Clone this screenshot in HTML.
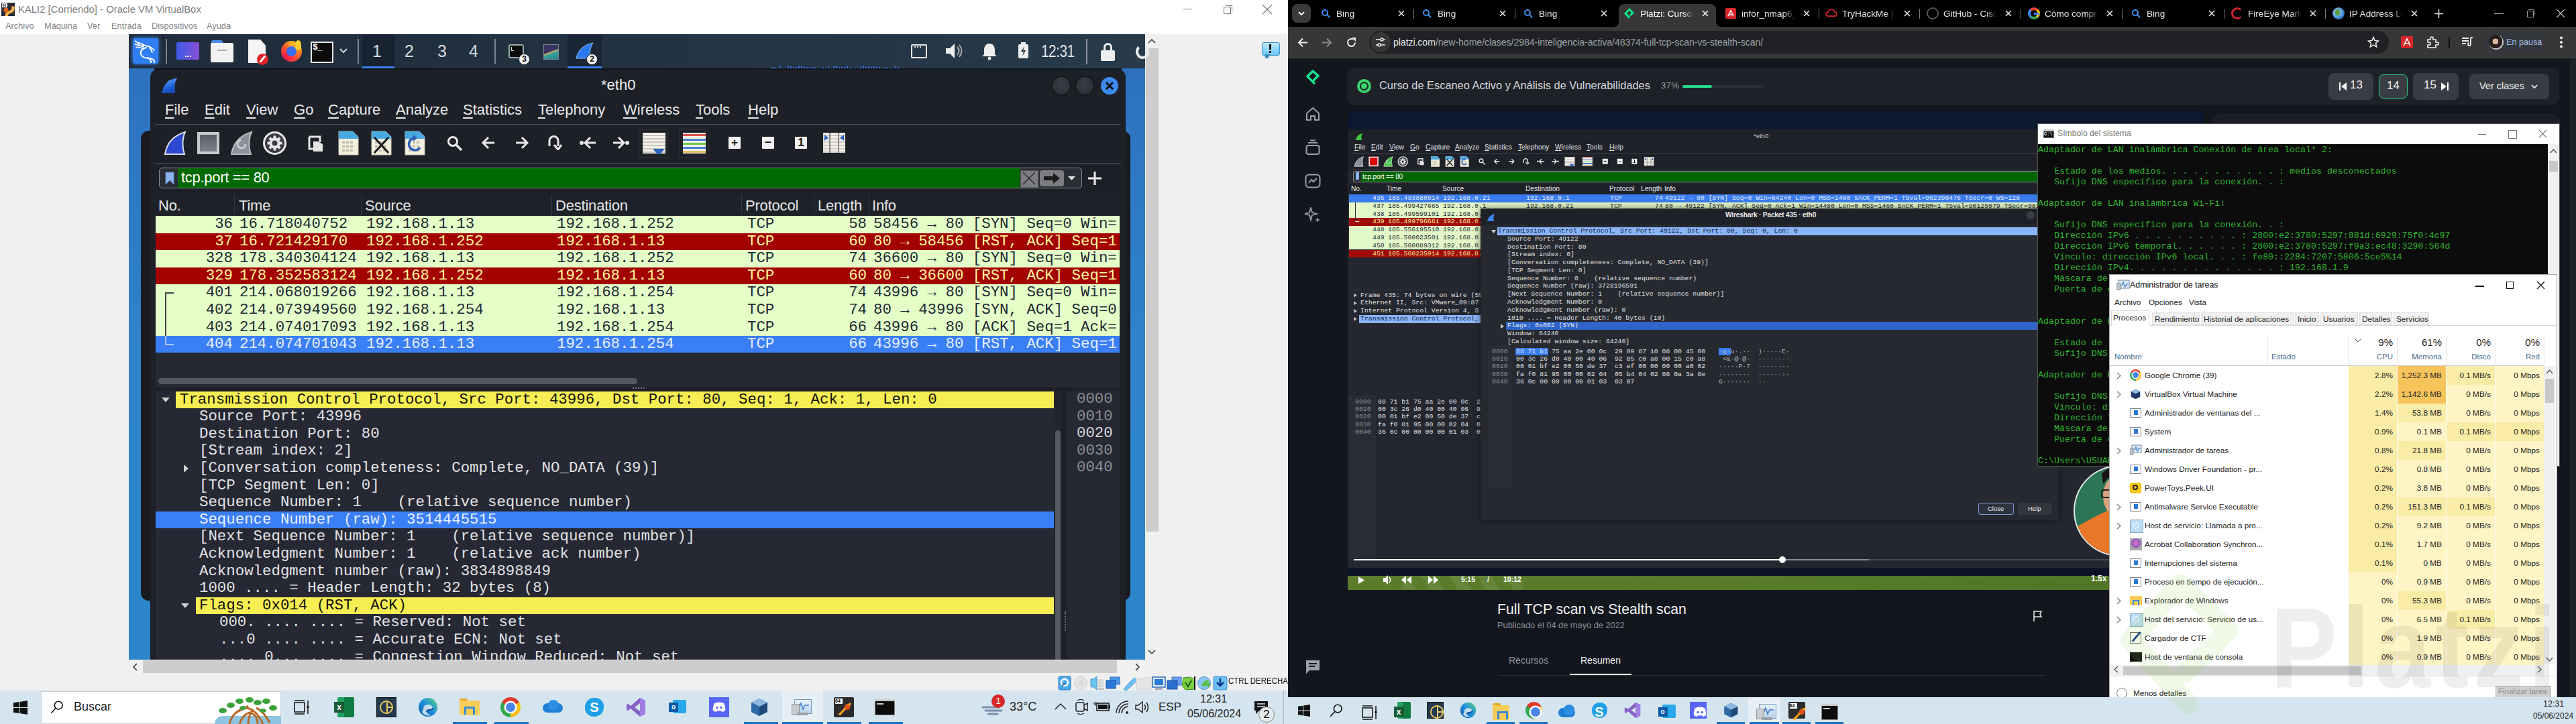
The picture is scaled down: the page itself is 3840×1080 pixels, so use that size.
<!DOCTYPE html>
<html><head><meta charset="utf-8"><style>
html,body{margin:0;padding:0}
body{width:3840px;height:1080px;position:relative;overflow:hidden;background:#000;font-family:"Liberation Sans",sans-serif}
.a{position:absolute}
.m{font-family:"Liberation Mono",monospace}
.nw{white-space:pre}

</style></head><body>
<!-- LEFT MONITOR: VirtualBox frame -->
<div class="a" style="left:0;top:0;width:1920px;height:51px;background:#fff"></div>
<div class="a" style="left:2px;top:4px;width:20px;height:20px;background:#2a2a38"></div>
<svg class="a" style="left:2px;top:4px" width="20" height="20"><path d="M5 20C6 14 9 13 12 12C15 11 16 8 15 5L20 6C20 11 18 15 13 16C10 17 10 19 10 20Z" fill="#f2b14a"/><circle cx="7" cy="11" r="3.5" fill="#e0601a"/><rect x="1" y="1" width="8" height="6" fill="#fff"/><text x="1.5" y="6" font-size="5" font-weight="bold" fill="#123">64</text></svg>
<div class="a nw" style="left:27px;top:6px;font-size:14.85px;color:#7d7d7d">KALI2 [Corriendo] - Oracle VM VirtualBox</div>
<div class="a nw" style="left:8px;top:31px;font-size:12.8px;color:#858585">Archivo</div>
<div class="a nw" style="left:66px;top:31px;font-size:12.8px;color:#858585">Máquina</div>
<div class="a nw" style="left:130px;top:31px;font-size:12.8px;color:#858585">Ver</div>
<div class="a nw" style="left:166px;top:31px;font-size:12.8px;color:#858585">Entrada</div>
<div class="a nw" style="left:226px;top:31px;font-size:12.8px;color:#858585">Dispositivos</div>
<div class="a nw" style="left:308px;top:31px;font-size:12.8px;color:#858585">Ayuda</div>
<!-- window controls -->
<div class="a" style="left:1764px;top:13px;width:13px;height:1px;background:#777"></div>
<div class="a" style="left:1824px;top:10px;width:9px;height:9px;border:1px solid #777"></div>
<div class="a" style="left:1827px;top:8px;width:9px;height:9px;border-top:1px solid #777;border-right:1px solid #777"></div>
<svg class="a" style="left:1881px;top:6px" width="16" height="16"><path d="M1 1L15 15M15 1L1 15" stroke="#777" stroke-width="1.2"/></svg>
<!-- content bg -->
<div class="a" style="left:0;top:51px;width:1920px;height:979px;background:#f0f0f0"></div>
<!-- info bubble -->
<div class="a" style="left:1881px;top:63px;width:25px;height:18px;background:linear-gradient(#bfe8ff,#6cc8f5);border:1px solid #3a8fc8;border-radius:3px"></div>
<div class="a" style="left:1886px;top:81px;width:0;height:0;border-left:4px solid #3a8fc8;border-right:4px solid transparent;border-top:6px solid #3a8fc8"></div>
<div class="a" style="left:1892px;top:66px;width:3px;height:8px;background:#111"></div>
<div class="a" style="left:1892px;top:76px;width:3px;height:3px;background:#111"></div>
<!-- vertical scrollbar -->
<svg class="a" style="left:1711px;top:56px" width="12" height="10"><path d="M1 8L6 3L11 8" stroke="#333" stroke-width="1.5" fill="none"/></svg>
<div class="a" style="left:1708px;top:72px;width:19px;height:721px;background:#cdcdcd"></div>
<svg class="a" style="left:1711px;top:968px" width="12" height="10"><path d="M1 2L6 7L11 2" stroke="#333" stroke-width="1.5" fill="none"/></svg>
<!-- VM screen -->
<div class="a" style="left:192px;top:51px;width:1515px;height:933px;background:linear-gradient(180deg,#2d6fbf 0%,#2f83cc 50%,#2a86c8 100%);overflow:hidden">
</div>
<!-- behind window -->
<div class="a" style="left:210px;top:195px;width:1475px;height:701px;background:#181a20;border-radius:12px"></div>
<!-- Kali panel -->
<div class="a" style="left:192px;top:51px;width:1515px;height:51px;background:linear-gradient(90deg,#1f2c3b,#223240 45%,#273b4b)"></div>
<div class="a" style="left:198px;top:57px;width:38px;height:38px;background:#2f7ff2;border-radius:3px;box-shadow:0 0 6px #3a8cff"></div>
<svg class="a" style="left:199px;top:58px" width="36" height="36" viewBox="0 0 36 36"><path d="M3 4L16 9M2 8L15 12M4 12L14 14M3 3L10 10" stroke="#fff" stroke-width="1.6" fill="none" stroke-linecap="round"/><path d="M13 10Q24 9 31 17M24 12L28 20" stroke="#fff" stroke-width="1.8" fill="none" stroke-linecap="round"/><path d="M19 13Q9 16 11 23Q13 29 24 29Q32 30 31 36M21 28Q27 31 26 36" stroke="#fff" stroke-width="2" fill="none" stroke-linecap="round"/></svg>
<div class="a" style="left:247px;top:58px;width:2px;height:37px;background:#7d8591"></div>
<div class="a" style="left:263px;top:63px;width:34px;height:26px;background:linear-gradient(90deg,#3b5be8,#8a4fd6);border-radius:2px"></div>
<div class="a" style="left:276px;top:83px;width:9px;height:2px;border-top:2px dotted #fff"></div>
<div class="a" style="left:315px;top:60px;width:17px;height:7px;background:#4a90e8;border-radius:3px 3px 0 0"></div>
<div class="a" style="left:314px;top:64px;width:34px;height:29px;background:#f2f2f2;border-radius:2px"></div>
<div class="a" style="left:324px;top:74px;width:14px;height:2px;background:#aaa"></div>
<div class="a" style="left:370px;top:59px;width:26px;height:35px;background:#f4f4f4;clip-path:polygon(0 0,70% 0,100% 25%,100% 100%,0 100%)"></div>
<div class="a" style="left:383px;top:80px;width:17px;height:17px;background:#e0242a;border-radius:50%"></div>
<div class="a" style="left:390px;top:82px;width:3px;height:12px;background:#fff;transform:rotate(40deg)"></div>
<div class="a" style="left:419px;top:61px;width:31px;height:31px;border-radius:50%;background:conic-gradient(from 0deg,#ffb520,#ff8a1a 25%,#ff3b3b 45%,#e8204a 65%,#ff5a2a 85%,#ffb520)"></div><div class="a" style="left:427px;top:69px;width:15px;height:15px;border-radius:50%;background:#3a6ff0"></div><div class="a" style="left:440px;top:60px;width:9px;height:14px;background:#ffd030;border-radius:50% 50% 30% 30%"></div>
<div class="a" style="left:463px;top:62px;width:30px;height:28px;background:#0c0c0c;border:2px solid #e8e8e8"></div>
<div class="a nw m" style="left:466px;top:63px;font-size:13px;color:#fff;font-weight:bold;letter-spacing:-1px">$_</div>
<svg class="a" style="left:506px;top:72px" width="12" height="8"><path d="M1 1L6 6L11 1" stroke="#cfd3d8" stroke-width="2" fill="none"/></svg>
<div class="a" style="left:533px;top:58px;width:2px;height:37px;background:#7d8591"></div>
<div class="a" style="left:540px;top:51px;width:48px;height:51px;background:#172331"></div>
<div class="a" style="left:540px;top:99px;width:48px;height:3px;background:#3b82f0"></div>
<div class="a nw" style="left:555px;top:62px;font-size:25px;color:#d5d9de">1</div>
<div class="a nw" style="left:603px;top:62px;font-size:25px;color:#d5d9de">2</div>
<div class="a nw" style="left:652px;top:62px;font-size:25px;color:#d5d9de">3</div>
<div class="a nw" style="left:699px;top:62px;font-size:25px;color:#d5d9de">4</div>
<div class="a" style="left:737px;top:58px;width:2px;height:37px;background:#7d8591"></div>
<div class="a" style="left:758px;top:66px;width:23px;height:21px;background:#0c0c0c;border:2px solid #9aa;border-radius:3px;box-sizing:border-box"></div><div class="a" style="left:762px;top:70px;width:3px;height:5px;border-left:1.5px solid #ddd;border-bottom:1.5px solid #ddd"></div>
<div class="a" style="left:773px;top:80px;width:17px;height:17px;background:#f2f2f2;border:1.5px solid #222;box-sizing:border-box;border-radius:50%;color:#111;font-size:12px;line-height:15px;text-align:center;font-weight:bold">3</div>
<div class="a" style="left:810px;top:66px;width:21px;height:21px;background:linear-gradient(160deg,#3a3560 45%,#c8b860 52%,#3aa0a0 60%,#2a8890);border:1px solid #7a8a95"></div>
<div class="a" style="left:846px;top:51px;width:51px;height:51px;background:#1a2636"></div>
<div class="a" style="left:846px;top:99px;width:51px;height:3px;background:#3b82f0"></div>
<svg class="a" style="left:858px;top:63px" width="28" height="26"><path d="M1 24C3 14 10 4 26 1C22 7 20 16 22 24Z" fill="#2a78f0" stroke="#9ac0ff" stroke-width="1"/></svg>
<div class="a" style="left:874px;top:80px;width:17px;height:17px;background:#f2f2f2;border:1.5px solid #222;box-sizing:border-box;border-radius:50%;color:#111;font-size:12px;line-height:15px;text-align:center;font-weight:bold">2</div>
<div class="a" style="left:230px;top:102px;width:1442px;height:3px;background:#12151b"></div>
<!-- tray -->
<svg class="a" style="left:1150px;top:97px" width="194" height="5"><rect x="0" y="3" width="2" height="2" fill="#3a70e0"/><rect x="4" y="3" width="2" height="2" fill="#3a70e0"/><rect x="8" y="4" width="2" height="1" fill="#3a70e0"/><rect x="12" y="1" width="2" height="4" fill="#3a70e0"/><rect x="16" y="4" width="2" height="1" fill="#3a70e0"/><rect x="20" y="4" width="2" height="1" fill="#3a70e0"/><rect x="24" y="1" width="2" height="4" fill="#3a70e0"/><rect x="28" y="2" width="2" height="3" fill="#3a70e0"/><rect x="32" y="3" width="2" height="2" fill="#3a70e0"/><rect x="36" y="3" width="2" height="2" fill="#3a70e0"/><rect x="40" y="1" width="2" height="4" fill="#3a70e0"/><rect x="44" y="1" width="2" height="4" fill="#3a70e0"/><rect x="48" y="3" width="2" height="2" fill="#3a70e0"/><rect x="52" y="3" width="2" height="2" fill="#3a70e0"/><rect x="56" y="3" width="2" height="2" fill="#3a70e0"/><rect x="60" y="3" width="2" height="2" fill="#3a70e0"/><rect x="64" y="3" width="2" height="2" fill="#3a70e0"/><rect x="68" y="4" width="2" height="1" fill="#3a70e0"/><rect x="72" y="4" width="2" height="1" fill="#3a70e0"/><rect x="76" y="3" width="2" height="2" fill="#3a70e0"/><rect x="80" y="4" width="2" height="1" fill="#3a70e0"/><rect x="84" y="2" width="2" height="3" fill="#3a70e0"/><rect x="88" y="4" width="2" height="1" fill="#3a70e0"/><rect x="92" y="2" width="2" height="3" fill="#3a70e0"/><rect x="96" y="1" width="2" height="4" fill="#3a70e0"/><rect x="100" y="3" width="2" height="2" fill="#3a70e0"/><rect x="104" y="3" width="2" height="2" fill="#3a70e0"/><rect x="108" y="3" width="2" height="2" fill="#3a70e0"/><rect x="112" y="1" width="2" height="4" fill="#3a70e0"/><rect x="116" y="3" width="2" height="2" fill="#3a70e0"/><rect x="120" y="4" width="2" height="1" fill="#3a70e0"/><rect x="124" y="4" width="2" height="1" fill="#3a70e0"/><rect x="128" y="4" width="2" height="1" fill="#3a70e0"/><rect x="132" y="3" width="2" height="2" fill="#3a70e0"/><rect x="136" y="1" width="2" height="4" fill="#3a70e0"/><rect x="140" y="3" width="2" height="2" fill="#3a70e0"/><rect x="144" y="2" width="2" height="3" fill="#3a70e0"/><rect x="148" y="3" width="2" height="2" fill="#3a70e0"/><rect x="152" y="2" width="2" height="3" fill="#3a70e0"/><rect x="156" y="3" width="2" height="2" fill="#3a70e0"/><rect x="160" y="3" width="2" height="2" fill="#3a70e0"/><rect x="164" y="4" width="2" height="1" fill="#3a70e0"/><rect x="168" y="3" width="2" height="2" fill="#3a70e0"/><rect x="172" y="3" width="2" height="2" fill="#3a70e0"/><rect x="176" y="4" width="2" height="1" fill="#3a70e0"/><rect x="180" y="4" width="2" height="1" fill="#3a70e0"/><rect x="184" y="2" width="2" height="3" fill="#3a70e0"/><rect x="188" y="3" width="2" height="2" fill="#3a70e0"/></svg>
<div class="a" style="left:1358px;top:66px;width:20px;height:17px;border:2px solid #e8e8e8;border-radius:2px"></div>
<div class="a" style="left:1363px;top:69px;width:10px;height:4px;border-top:2px dotted #e8e8e8"></div>
<svg class="a" style="left:1408px;top:62px" width="30" height="28"><path d="M2 10H8L15 3V25L8 18H2Z" fill="#eee"/><path d="M19 8Q24 14 19 20M22 5Q29 14 22 23" stroke="#aaa" stroke-width="2" fill="none"/></svg>
<svg class="a" style="left:1462px;top:62px" width="26" height="28"><path d="M13 3C7 3 5 8 5 13V19L2 22H24L21 19V13C21 8 19 3 13 3Z" fill="#eee"/><circle cx="13" cy="25" r="2.5" fill="#eee"/></svg>
<div class="a" style="left:1518px;top:66px;width:15px;height:21px;background:#eee;border-radius:2px"></div>
<div class="a" style="left:1522px;top:63px;width:7px;height:3px;background:#eee"></div>
<svg class="a" style="left:1519px;top:68px" width="13" height="17"><path d="M8 1L3 9H7L5 16L10 7H6Z" fill="#1e2c3c"/></svg>
<div class="a nw" style="left:1552px;top:62px;font-size:21px;color:#e6e8ea;letter-spacing:-0.6px;transform:scaleY(1.2);transform-origin:0 0">12:31</div>
<div class="a" style="left:1619px;top:58px;width:2px;height:38px;background:#8d949c"></div>
<div class="a" style="left:1641px;top:75px;width:21px;height:16px;background:#eee;border-radius:2px"></div>
<div class="a" style="left:1645px;top:64px;width:13px;height:16px;border:3px solid #eee;border-bottom:none;border-radius:7px 7px 0 0;box-sizing:border-box"></div>
<div class="a" style="left:1693px;top:66px;width:20px;height:22px;border:4px solid #eee;border-radius:50%;box-sizing:border-box;border-top-color:transparent"></div>
<div class="a" style="left:224px;top:104px;width:1454px;height:880px;background:#1e2027;border-radius:10px 10px 0 0"></div>
<div class="a" style="left:241px;top:116px;width:23px;height:23px;background:linear-gradient(160deg,#6fb0ff,#1d5fd8 60%,#0f3fa0);clip-path:polygon(0 100%,15% 55%,45% 18%,100% 0,85% 40%,88% 100%)"></div>
<div class="a nw" style="left:896px;top:114px;font-size:22px;color:#eef0f2">*eth0</div>
<div class="a" style="left:1569px;top:115px;width:26px;height:26px;border-radius:50%;background:radial-gradient(circle at 50% 40%,#3a3d45,#2a2c33);box-shadow:0 0 0 1.5px #111318"></div>
<div class="a" style="left:1604px;top:115px;width:26px;height:26px;border-radius:50%;background:radial-gradient(circle at 50% 40%,#3a3d45,#2a2c33);box-shadow:0 0 0 1.5px #111318"></div>
<div class="a" style="left:1641px;top:115px;width:26px;height:26px;border-radius:50%;background:#3d8bf0"></div>
<svg class="a" style="left:1647px;top:121px" width="14" height="14"><path d="M2 2L12 12M12 2L2 12" stroke="#0d0d0d" stroke-width="3"/></svg>
<div class="a nw" style="left:246px;top:151px;font-size:22px;color:#e8e9eb"><u style="text-underline-offset:4px;text-decoration-thickness:2px">F</u>ile</div>
<div class="a nw" style="left:305px;top:151px;font-size:22px;color:#e8e9eb"><u style="text-underline-offset:4px;text-decoration-thickness:2px">E</u>dit</div>
<div class="a nw" style="left:367px;top:151px;font-size:22px;color:#e8e9eb"><u style="text-underline-offset:4px;text-decoration-thickness:2px">V</u>iew</div>
<div class="a nw" style="left:438px;top:151px;font-size:22px;color:#e8e9eb"><u style="text-underline-offset:4px;text-decoration-thickness:2px">G</u>o</div>
<div class="a nw" style="left:489px;top:151px;font-size:22px;color:#e8e9eb"><u style="text-underline-offset:4px;text-decoration-thickness:2px">C</u>apture</div>
<div class="a nw" style="left:590px;top:151px;font-size:22px;color:#e8e9eb"><u style="text-underline-offset:4px;text-decoration-thickness:2px">A</u>nalyze</div>
<div class="a nw" style="left:690px;top:151px;font-size:22px;color:#e8e9eb"><u style="text-underline-offset:4px;text-decoration-thickness:2px">S</u>tatistics</div>
<div class="a nw" style="left:802px;top:151px;font-size:22px;color:#e8e9eb"><u style="text-underline-offset:4px;text-decoration-thickness:2px">T</u>elephony</div>
<div class="a nw" style="left:929px;top:151px;font-size:22px;color:#e8e9eb"><u style="text-underline-offset:4px;text-decoration-thickness:2px">W</u>ireless</div>
<div class="a nw" style="left:1037px;top:151px;font-size:22px;color:#e8e9eb"><u style="text-underline-offset:4px;text-decoration-thickness:2px">T</u>ools</div>
<div class="a nw" style="left:1115px;top:151px;font-size:22px;color:#e8e9eb"><u style="text-underline-offset:4px;text-decoration-thickness:2px">H</u>elp</div>
<div class="a" style="left:231px;top:185px;width:1440px;height:1px;background:#4d5058"></div>
<div class="a" style="left:231px;top:243px;width:1440px;height:1px;background:#4d5058"></div><svg class="a" style="left:244px;top:195px" width="34" height="37" viewBox="0 0 34 37"><path d="M2 35C4 22 12 8 32 2C28 10 27 24 31 35Z" fill="#2c47d0" stroke="#d9dbe0" stroke-width="2"/></svg>
<div class="a" style="left:294px;top:197px;width:33px;height:33px;box-sizing:border-box;border:4px solid #c9cacd;background:linear-gradient(#5b5e66,#7d8088)"></div>
<svg class="a" style="left:343px;top:195px" width="34" height="37" viewBox="0 0 34 37"><path d="M2 35C4 22 12 8 32 2C28 10 27 24 31 35Z" fill="#8d9098" stroke="#b9bbc0" stroke-width="2"/><path d="M23 20A6 6 0 1 1 17 14" stroke="#c8c9cc" stroke-width="3" fill="none"/></svg>
<svg class="a" style="left:391px;top:195px" width="37" height="37" viewBox="0 0 37 37"><circle cx="18.5" cy="18.5" r="16" fill="#3a3c42" stroke="#e8e8ea" stroke-width="3"/><circle cx="18.5" cy="18.5" r="8" fill="#e8e8ea"/><rect x="16.5" y="7.5" width="4" height="5" fill="#e8e8ea" transform="rotate(0 18.5 18.5)"/><rect x="16.5" y="7.5" width="4" height="5" fill="#e8e8ea" transform="rotate(45 18.5 18.5)"/><rect x="16.5" y="7.5" width="4" height="5" fill="#e8e8ea" transform="rotate(90 18.5 18.5)"/><rect x="16.5" y="7.5" width="4" height="5" fill="#e8e8ea" transform="rotate(135 18.5 18.5)"/><rect x="16.5" y="7.5" width="4" height="5" fill="#e8e8ea" transform="rotate(180 18.5 18.5)"/><rect x="16.5" y="7.5" width="4" height="5" fill="#e8e8ea" transform="rotate(225 18.5 18.5)"/><rect x="16.5" y="7.5" width="4" height="5" fill="#e8e8ea" transform="rotate(270 18.5 18.5)"/><rect x="16.5" y="7.5" width="4" height="5" fill="#e8e8ea" transform="rotate(315 18.5 18.5)"/><circle cx="18.5" cy="18.5" r="4" fill="#3a3c42"/></svg>
<svg class="a" style="left:459px;top:202px" width="24" height="24" viewBox="0 0 24 24"><path d="M2 2H18V10M2 2V20H8" stroke="#e6e6e6" stroke-width="3" fill="none"/><path d="M8 9H15L22 13V24H8Z" fill="#e6e6e6"/></svg>
<svg class="a" style="left:504px;top:195px" width="31" height="37" viewBox="0 0 31 37"><path d="M1 1H22L30 9V36H1Z" fill="#f3f0de" stroke="#c9c7b8"/><path d="M1 1H22L30 9V12H1Z" fill="#4aa8e0"/><g fill="#b9b9a8"><rect x="6" y="16" width="4" height="3"/><rect x="12" y="16" width="4" height="3"/><rect x="18" y="16" width="4" height="3"/><rect x="6" y="22" width="4" height="3"/><rect x="12" y="22" width="4" height="3"/><rect x="18" y="22" width="4" height="3"/><rect x="6" y="28" width="4" height="3"/><rect x="12" y="28" width="4" height="3"/><rect x="18" y="28" width="4" height="3"/></g></svg>
<svg class="a" style="left:553px;top:195px" width="31" height="37" viewBox="0 0 31 37"><path d="M1 1H22L30 9V36H1Z" fill="#f3f0de" stroke="#c9c7b8"/><path d="M1 1H22L30 9V12H1Z" fill="#4aa8e0"/><g fill="#b9b9a8"><rect x="6" y="16" width="4" height="3"/><rect x="12" y="16" width="4" height="3"/><rect x="18" y="16" width="4" height="3"/><rect x="6" y="22" width="4" height="3"/><rect x="12" y="22" width="4" height="3"/><rect x="18" y="22" width="4" height="3"/><rect x="6" y="28" width="4" height="3"/><rect x="12" y="28" width="4" height="3"/><rect x="18" y="28" width="4" height="3"/></g><path d="M5 10L26 33M26 10L5 33" stroke="#1a1a1a" stroke-width="3"/></svg>
<svg class="a" style="left:603px;top:195px" width="31" height="37" viewBox="0 0 31 37"><path d="M1 1H22L30 9V36H1Z" fill="#f3f0de" stroke="#c9c7b8"/><path d="M1 1H22L30 9V12H1Z" fill="#4aa8e0"/><g fill="#b9b9a8"><rect x="6" y="16" width="4" height="3"/><rect x="12" y="16" width="4" height="3"/><rect x="18" y="16" width="4" height="3"/><rect x="6" y="22" width="4" height="3"/><rect x="12" y="22" width="4" height="3"/><rect x="18" y="22" width="4" height="3"/><rect x="6" y="28" width="4" height="3"/><rect x="12" y="28" width="4" height="3"/><rect x="18" y="28" width="4" height="3"/></g><path d="M23 25A9 9 0 1 1 15 11" stroke="#2a5fb8" stroke-width="3.5" fill="none"/><path d="M13 6L19 11L13 16Z" fill="#2a5fb8"/></svg>
<svg class="a" style="left:666px;top:202px" width="24" height="24"><circle cx="9" cy="9" r="6.5" stroke="#e8e8ea" stroke-width="3" fill="none"/><path d="M14 14L22 22" stroke="#e8e8ea" stroke-width="3.5"/></svg>
<svg class="a" style="left:717px;top:203px" width="22" height="20"><path d="M20 10H3M11 2L3 10L11 18" stroke="#e8e8ea" stroke-width="3" fill="none"/></svg>
<svg class="a" style="left:767px;top:203px" width="22" height="20"><path d="M2 10H19M11 2L19 10L11 18" stroke="#e8e8ea" stroke-width="3" fill="none"/></svg>
<svg class="a" style="left:816px;top:201px" width="22" height="23"><path d="M3 17V9A6.5 6.5 0 0 1 16 9V17" stroke="#e8e8ea" stroke-width="3" fill="none"/><path d="M10 15L16 22L21 15" stroke="#e8e8ea" stroke-width="3" fill="none"/></svg>
<svg class="a" style="left:863px;top:203px" width="27" height="20"><circle cx="4" cy="10" r="3" fill="#e8e8ea"/><path d="M25 10H10M17 2L9 10L17 18" stroke="#e8e8ea" stroke-width="3" fill="none"/></svg>
<svg class="a" style="left:912px;top:203px" width="27" height="20"><circle cx="23" cy="10" r="3" fill="#e8e8ea"/><path d="M2 10H17M10 2L18 10L10 18" stroke="#e8e8ea" stroke-width="3" fill="none"/></svg>
<div class="a" style="left:952px;top:193px;width:43px;height:42px;border:1px solid #30333b;border-radius:4px;box-sizing:border-box"></div>
<div class="a" style="left:958px;top:198px;width:34px;height:31px;background:repeating-linear-gradient(#f3f1ea 0 3px,#c9c6bd 3px 5px)"></div>
<div class="a" style="left:973px;top:222px;width:18px;height:8px;background:#2a64c0;clip-path:polygon(0 0,100% 0,60% 100%,40% 100%)"></div>
<div class="a" style="left:1012px;top:193px;width:44px;height:42px;border:1px solid #30333b;border-radius:4px;box-sizing:border-box"></div>
<div class="a" style="left:1018px;top:198px;width:34px;height:31px;background:linear-gradient(#f3f1ea 0 2px,#e05050 2px 5px,#f3f1ea 5px 9px,#4a7fd0 9px 12px,#f3f1ea 12px 15px,#6acb4a 15px 18px,#f3f1ea 18px 21px,#4a7fd0 21px 24px,#f3f1ea 24px 27px,#e8c060 27px 30px,#f3f1ea 30px)"></div>
<div class="a" style="left:1086px;top:204px;width:18px;height:18px;background:#f2f2f2;border-radius:1px;color:#111;font-weight:bold;font-size:17px;line-height:18px;text-align:center">+</div>
<div class="a" style="left:1136px;top:204px;width:18px;height:18px;background:#f2f2f2;border-radius:1px;color:#111;font-weight:bold;font-size:17px;line-height:18px;text-align:center">−</div>
<div class="a" style="left:1185px;top:204px;width:18px;height:18px;background:#f2f2f2;border-radius:1px;color:#111;font-weight:bold;font-size:17px;line-height:18px;text-align:center">1</div>
<div class="a" style="left:1227px;top:198px;width:33px;height:30px;background:repeating-linear-gradient(#f1efe8 0 3px,#cfccc3 3px 5px)"></div>
<div class="a" style="left:1236px;top:198px;width:2px;height:30px;background:#888"></div><div class="a" style="left:1249px;top:198px;width:2px;height:30px;background:#888"></div>
<div class="a" style="left:1229px;top:201px;width:6px;height:9px;background:#2a64c0;clip-path:polygon(0 0,100% 50%,0 100%)"></div><div class="a" style="left:1252px;top:201px;width:6px;height:9px;background:#2a64c0;clip-path:polygon(100% 0,0 50%,100% 100%)"></div>
<div class="a" style="left:237px;top:250px;width:1376px;height:31px;box-sizing:border-box;border:1px solid #8a8d93;border-radius:5px;background:#2a2d33"></div>
<div class="a" style="left:265px;top:251px;width:1255px;height:29px;background:#006a00"></div>
<svg class="a" style="left:246px;top:256px" width="14" height="20"><path d="M1 1H13V19L7 13L1 19Z" fill="#8ab4f0" stroke="#5a86c8"/></svg>
<div class="a nw" style="left:270px;top:252px;font-size:22px;color:#fff;letter-spacing:-0.3px">tcp.port == 80</div>
<div class="a" style="left:1521px;top:254px;width:25px;height:24px;background:#7b7d81;border:1px solid #555"></div>
<svg class="a" style="left:1523px;top:256px" width="22" height="20"><path d="M2 1L20 19M20 1L2 19" stroke="#2a2a2a" stroke-width="1.5"/></svg>
<div class="a" style="left:1550px;top:254px;width:36px;height:24px;background:#7b7d81;border-radius:4px"></div>
<svg class="a" style="left:1554px;top:257px" width="28" height="18"><path d="M2 6H16V1L26 9L16 17V12H2Z" fill="#1a1a1a"/></svg>
<svg class="a" style="left:1592px;top:263px" width="11" height="7"><path d="M0 0H11L5.5 6Z" fill="#ddd"/></svg>
<svg class="a" style="left:1621px;top:255px" width="22" height="22"><path d="M11 1V21M1 11H21" stroke="#eee" stroke-width="3"/></svg><div class="a" style="left:232px;top:289px;width:1437px;height:33px;background:#1f2128"></div>
<div class="a" style="left:349px;top:290px;width:1px;height:31px;background:#363941"></div>
<div class="a" style="left:538px;top:290px;width:1px;height:31px;background:#363941"></div>
<div class="a" style="left:822px;top:290px;width:1px;height:31px;background:#363941"></div>
<div class="a" style="left:1105px;top:290px;width:1px;height:31px;background:#363941"></div>
<div class="a" style="left:1213px;top:290px;width:1px;height:31px;background:#363941"></div>
<div class="a" style="left:1295px;top:290px;width:1px;height:31px;background:#363941"></div>
<div class="a nw" style="left:236px;top:294px;font-size:22px;color:#e6e7e9;letter-spacing:-0.2px">No.</div>
<div class="a nw" style="left:356px;top:294px;font-size:22px;color:#e6e7e9;letter-spacing:-0.2px">Time</div>
<div class="a nw" style="left:544px;top:294px;font-size:22px;color:#e6e7e9;letter-spacing:-0.2px">Source</div>
<div class="a nw" style="left:828px;top:294px;font-size:22px;color:#e6e7e9;letter-spacing:-0.2px">Destination</div>
<div class="a nw" style="left:1111px;top:294px;font-size:22px;color:#e6e7e9;letter-spacing:-0.2px">Protocol</div>
<div class="a nw" style="left:1219px;top:294px;font-size:22px;color:#e6e7e9;letter-spacing:-0.2px">Length</div>
<div class="a nw" style="left:1300px;top:294px;font-size:22px;color:#e6e7e9;letter-spacing:-0.2px">Info</div>
<div class="a m nw" style="left:232px;top:322.0px;width:1437px;height:25.6px;background:#e5ffc9;color:#1d2a33;font-size:22.4px;line-height:25.6px;overflow:hidden"><span class="a" style="right:1322px">36</span><span class="a" style="left:125px">16.718040752</span><span class="a" style="left:314px">192.168.1.13</span><span class="a" style="left:598px">192.168.1.252</span><span class="a" style="left:882px">TCP</span><span class="a" style="right:377px">58</span><span class="a" style="left:1070px">58456 → 80 [SYN] Seq=0 Win=</span></div>
<div class="a m nw" style="left:232px;top:347.6px;width:1437px;height:25.6px;background:#a30000;color:#fffa9e;font-size:22.4px;line-height:25.6px;overflow:hidden"><span class="a" style="right:1322px">37</span><span class="a" style="left:125px">16.721429170</span><span class="a" style="left:314px">192.168.1.252</span><span class="a" style="left:598px">192.168.1.13</span><span class="a" style="left:882px">TCP</span><span class="a" style="right:377px">60</span><span class="a" style="left:1070px">80 → 58456 [RST, ACK] Seq=1</span></div>
<div class="a m nw" style="left:232px;top:373.2px;width:1437px;height:25.6px;background:#e5ffc9;color:#1d2a33;font-size:22.4px;line-height:25.6px;overflow:hidden"><span class="a" style="right:1322px">328</span><span class="a" style="left:125px">178.340304124</span><span class="a" style="left:314px">192.168.1.13</span><span class="a" style="left:598px">192.168.1.252</span><span class="a" style="left:882px">TCP</span><span class="a" style="right:377px">74</span><span class="a" style="left:1070px">36600 → 80 [SYN] Seq=0 Win=</span></div>
<div class="a m nw" style="left:232px;top:398.8px;width:1437px;height:25.6px;background:#a30000;color:#fffa9e;font-size:22.4px;line-height:25.6px;overflow:hidden"><span class="a" style="right:1322px">329</span><span class="a" style="left:125px">178.352583124</span><span class="a" style="left:314px">192.168.1.252</span><span class="a" style="left:598px">192.168.1.13</span><span class="a" style="left:882px">TCP</span><span class="a" style="right:377px">60</span><span class="a" style="left:1070px">80 → 36600 [RST, ACK] Seq=1</span></div>
<div class="a m nw" style="left:232px;top:424.4px;width:1437px;height:25.6px;background:#e5ffc9;color:#1d2a33;font-size:22.4px;line-height:25.6px;overflow:hidden"><span class="a" style="right:1322px">401</span><span class="a" style="left:125px">214.068019266</span><span class="a" style="left:314px">192.168.1.13</span><span class="a" style="left:598px">192.168.1.254</span><span class="a" style="left:882px">TCP</span><span class="a" style="right:377px">74</span><span class="a" style="left:1070px">43996 → 80 [SYN] Seq=0 Win=</span></div>
<div class="a m nw" style="left:232px;top:450.0px;width:1437px;height:25.6px;background:#e5ffc9;color:#1d2a33;font-size:22.4px;line-height:25.6px;overflow:hidden"><span class="a" style="right:1322px">402</span><span class="a" style="left:125px">214.073949560</span><span class="a" style="left:314px">192.168.1.254</span><span class="a" style="left:598px">192.168.1.13</span><span class="a" style="left:882px">TCP</span><span class="a" style="right:377px">74</span><span class="a" style="left:1070px">80 → 43996 [SYN, ACK] Seq=0</span></div>
<div class="a m nw" style="left:232px;top:475.6px;width:1437px;height:25.6px;background:#e5ffc9;color:#1d2a33;font-size:22.4px;line-height:25.6px;overflow:hidden"><span class="a" style="right:1322px">403</span><span class="a" style="left:125px">214.074017093</span><span class="a" style="left:314px">192.168.1.13</span><span class="a" style="left:598px">192.168.1.254</span><span class="a" style="left:882px">TCP</span><span class="a" style="right:377px">66</span><span class="a" style="left:1070px">43996 → 80 [ACK] Seq=1 Ack=</span></div>
<div class="a m nw" style="left:232px;top:501.2px;width:1437px;height:25.6px;background:#3a7ff6;color:#e9efff;font-size:22.4px;line-height:25.6px;overflow:hidden"><span class="a" style="right:1322px">404</span><span class="a" style="left:125px">214.074701043</span><span class="a" style="left:314px">192.168.1.13</span><span class="a" style="left:598px">192.168.1.254</span><span class="a" style="left:882px">TCP</span><span class="a" style="right:377px">66</span><span class="a" style="left:1070px">43996 → 80 [RST, ACK] Seq=1</span></div>
<div class="a" style="left:246px;top:436px;width:13px;height:2px;background:#444"></div>
<div class="a" style="left:246px;top:436px;width:2px;height:65px;background:#444"></div>
<div class="a" style="left:246px;top:501px;width:2px;height:13px;background:#aac4f8"></div>
<div class="a" style="left:246px;top:513px;width:13px;height:2px;background:#aac4f8"></div>
<div class="a" style="left:232px;top:526px;width:1437px;height:52px;background:#262933"></div>
<div class="a" style="left:236px;top:564px;width:714px;height:9px;background:#55585f;border-radius:5px"></div>
<div class="a" style="left:943px;top:578px;width:18px;height:2px;border-top:2px dotted #777"></div>
<div class="a" style="left:232px;top:583px;width:1339px;height:401px;background:#262833"></div>
<div class="a" style="left:1571px;top:583px;width:11px;height:401px;background:#24262e"></div>
<div class="a" style="left:1573px;top:642px;width:8px;height:342px;background:#55585f;border-radius:4px 4px 0 0"></div>
<div class="a" style="left:1582px;top:583px;width:8px;height:401px;background:#1f2128"></div>
<div class="a" style="left:1587px;top:912px;width:2px;height:29px;border-left:2px dotted #777"></div>
<div class="a" style="left:1590px;top:583px;width:79px;height:401px;background:#262833"></div>
<div class="a m nw" style="left:1605px;top:583.0px;font-size:22.4px;line-height:25.6px;color:#8b8e95">0000</div>
<div class="a m nw" style="left:1605px;top:608.6px;font-size:22.4px;line-height:25.6px;color:#8b8e95">0010</div>
<div class="a m nw" style="left:1605px;top:634.2px;font-size:22.4px;line-height:25.6px;color:#d9d9d9">0020</div>
<div class="a m nw" style="left:1605px;top:659.8px;font-size:22.4px;line-height:25.6px;color:#8b8e95">0030</div>
<div class="a m nw" style="left:1605px;top:685.4px;font-size:22.4px;line-height:25.6px;color:#8b8e95">0040</div>
<div class="a" style="left:262px;top:583.5px;width:1309px;height:25.3px;background:#f6ee52"></div>
<svg class="a" style="left:241px;top:592.5px" width="12" height="8"><path d="M0 0H12L6 7Z" fill="#d0d0d0"/></svg>
<div class="a m nw" style="left:268px;top:583.5px;font-size:22.4px;line-height:25.6px;color:#111;width:1303px;overflow:hidden">Transmission Control Protocol, Src Port: 43996, Dst Port: 80, Seq: 1, Ack: 1, Len: 0</div>
<div class="a m nw" style="left:297px;top:609.1px;font-size:22.4px;line-height:25.6px;color:#e2e3e5;width:1274px;overflow:hidden">Source Port: 43996</div>
<div class="a m nw" style="left:297px;top:634.7px;font-size:22.4px;line-height:25.6px;color:#e2e3e5;width:1274px;overflow:hidden">Destination Port: 80</div>
<div class="a m nw" style="left:297px;top:660.3px;font-size:22.4px;line-height:25.6px;color:#e2e3e5;width:1274px;overflow:hidden">[Stream index: 2]</div>
<svg class="a" style="left:274px;top:692.9px" width="8" height="12"><path d="M0 0V12L7 6Z" fill="#d0d0d0"/></svg>
<div class="a m nw" style="left:297px;top:685.9px;font-size:22.4px;line-height:25.6px;color:#e2e3e5;width:1274px;overflow:hidden">[Conversation completeness: Complete, NO_DATA (39)]</div>
<div class="a m nw" style="left:297px;top:711.5px;font-size:22.4px;line-height:25.6px;color:#e2e3e5;width:1274px;overflow:hidden">[TCP Segment Len: 0]</div>
<div class="a m nw" style="left:297px;top:737.1px;font-size:22.4px;line-height:25.6px;color:#e2e3e5;width:1274px;overflow:hidden">Sequence Number: 1    (relative sequence number)</div>
<div class="a" style="left:232px;top:762.7px;width:1339px;height:25.3px;background:#3a7ff6"></div>
<div class="a m nw" style="left:297px;top:762.7px;font-size:22.4px;line-height:25.6px;color:#e9efff;width:1274px;overflow:hidden">Sequence Number (raw): 3514445515</div>
<div class="a m nw" style="left:297px;top:788.3px;font-size:22.4px;line-height:25.6px;color:#e2e3e5;width:1274px;overflow:hidden">[Next Sequence Number: 1    (relative sequence number)]</div>
<div class="a m nw" style="left:297px;top:813.9px;font-size:22.4px;line-height:25.6px;color:#e2e3e5;width:1274px;overflow:hidden">Acknowledgment Number: 1    (relative ack number)</div>
<div class="a m nw" style="left:297px;top:839.5px;font-size:22.4px;line-height:25.6px;color:#e2e3e5;width:1274px;overflow:hidden">Acknowledgment number (raw): 3834898849</div>
<div class="a m nw" style="left:297px;top:865.1px;font-size:22.4px;line-height:25.6px;color:#e2e3e5;width:1274px;overflow:hidden">1000 .... = Header Length: 32 bytes (8)</div>
<div class="a" style="left:292px;top:890.7px;width:1279px;height:25.3px;background:#f6ee52"></div>
<svg class="a" style="left:270px;top:899.7px" width="12" height="8"><path d="M0 0H12L6 7Z" fill="#d0d0d0"/></svg>
<div class="a m nw" style="left:297px;top:890.7px;font-size:22.4px;line-height:25.6px;color:#111;width:1274px;overflow:hidden">Flags: 0x014 (RST, ACK)</div>
<div class="a m nw" style="left:327px;top:916.3px;font-size:22.4px;line-height:25.6px;color:#e2e3e5;width:1244px;overflow:hidden">000. .... .... = Reserved: Not set</div>
<div class="a m nw" style="left:327px;top:941.9px;font-size:22.4px;line-height:25.6px;color:#e2e3e5;width:1244px;overflow:hidden">...0 .... .... = Accurate ECN: Not set</div>
<div class="a m nw" style="left:327px;top:967.5px;font-size:22.4px;line-height:25.6px;color:#e2e3e5;width:1244px;overflow:hidden">.... 0... .... = Congestion Window Reduced: Not set</div>
<div class="a" style="left:1669px;top:250px;width:9px;height:734px;background:#1e2027"></div><div class="a" style="left:0;top:984px;width:1920px;height:46px;background:#f0f0f0"></div>
<!-- horizontal scrollbar -->
<svg class="a" style="left:196px;top:989px" width="10" height="12"><path d="M8 1L3 6L8 11" stroke="#333" stroke-width="1.5" fill="none"/></svg>
<div class="a" style="left:213px;top:985px;width:1452px;height:19px;background:#cdcdcd"></div>
<svg class="a" style="left:1691px;top:989px" width="10" height="12"><path d="M2 1L7 6L2 11" stroke="#333" stroke-width="1.5" fill="none"/></svg>
<div class="a" style="left:0;top:1030px;width:1920px;height:50px;background:#d5e5f0"></div>
<svg class="a" style="left:19.5px;top:1044.5px" width="21" height="21" viewBox="0 0 20 20"><path d="M0 3L8 2V9.5H0ZM9 1.8L20 0V9.5H9ZM0 10.5H8V18L0 17ZM9 10.5H20V20L9 18.2Z" fill="#111"/></svg>
<div class="a" style="left:61px;top:1031px;width:358px;height:49px;background:#fff;box-shadow:inset 0 0 0 1px #c8d0d8"></div>
<svg class="a" style="left:74.0px;top:1044.0px" width="22" height="22" viewBox="0 0 30 30"><circle cx="18" cy="11" r="8" fill="none" stroke="#111" stroke-width="2.2"/><path d="M12 17L3 27" stroke="#111" stroke-width="2.2"/></svg>
<div class="a nw" style="left:110px;top:1044px;font-size:18px;color:#222">Buscar</div>
<div class="a" style="left:320px;top:1068px;width:99px;height:12px;background:#8ec4e0;border-radius:20px 0 0 0"></div>
<svg class="a" style="left:322px;top:1038px" width="95" height="42"><path d="M20 42Q25 22 45 18Q60 20 70 42M35 42Q40 28 50 25Q62 28 62 42M48 42Q48 30 55 20M30 25Q40 20 48 15M60 18Q70 22 80 40" stroke="#b86a28" stroke-width="3" fill="none"/><g fill="#3aa03a"><ellipse cx="10" cy="22" rx="6" ry="4"/><ellipse cx="22" cy="14" rx="6" ry="4"/><ellipse cx="35" cy="8" rx="6" ry="4"/><ellipse cx="50" cy="6" rx="6" ry="4"/><ellipse cx="62" cy="10" rx="6" ry="4"/><ellipse cx="75" cy="8" rx="6" ry="4"/><ellipse cx="85" cy="18" rx="6" ry="4"/><ellipse cx="40" cy="18" rx="5" ry="3"/><ellipse cx="70" cy="22" rx="5" ry="3"/></g></svg>
<svg class="a" style="left:438.0px;top:1044.0px" width="24" height="22"><rect x="1" y="4" width="15" height="14" fill="none" stroke="#111" stroke-width="1.5"/><path d="M1 1H16M1 21H16M21 1V21" stroke="#111" stroke-width="1.5"/><rect x="19.5" y="9" width="3" height="3" fill="#111"/></svg>
<div class="a" style="left:503.0px;top:1040.0px;width:25px;height:30px;background:linear-gradient(90deg,#21a366 0 40%,#107c41 40%);border-radius:2px"></div><div class="a" style="left:498.0px;top:1047.0px;width:15px;height:16px;background:#185c37;color:#fff;font-size:12px;font-weight:bold;text-align:center;line-height:16px">x</div>
<div class="a" style="left:561.0px;top:1040.0px;width:30px;height:30px;background:#243a4f;border:1px solid #111;box-sizing:border-box"></div><div class="a" style="left:566.0px;top:1045.0px;width:20px;height:20px;border:2px solid #e8c860;border-radius:50%;box-sizing:border-box"></div><div class="a" style="left:576.0px;top:1045.0px;width:2px;height:20px;background:#e8c860"></div><div class="a" style="left:576.0px;top:1054.0px;width:10px;height:2px;background:#e8c860"></div>
<svg class="a" style="left:623.0px;top:1040.0px" width="30" height="30" viewBox="0 0 30 30"><defs><linearGradient id="eg638" x1="0" y1="1" x2="1" y2="0"><stop offset="0" stop-color="#0c59a4"/><stop offset=".5" stop-color="#1e90e0"/><stop offset="1" stop-color="#5ed47a"/></linearGradient></defs><circle cx="15" cy="15" r="14" fill="url(#eg638)"/><path d="M8 18Q8 11 15 11Q21 11 22 16Q22 19 17 19Q13 19 13 22Q14 26 20 27Q10 29 6 22Z" fill="#d4e4ef" opacity=".9"/><path d="M13 22Q13 19 17 19Q22 19 22 16" fill="none" stroke="#0c4a90" stroke-width="2"/></svg>
<div class="a" style="left:685.0px;top:1042.0px;width:12px;height:5px;background:#e8a820;border-radius:2px"></div><div class="a" style="left:685.0px;top:1045.0px;width:30px;height:22px;background:#f7cd5a;border-radius:2px"></div><div class="a" style="left:692.0px;top:1054.0px;width:16px;height:12px;border:3px solid #3a8ad8;border-bottom:none;box-sizing:border-box"></div>
<div class="a" style="left:746.0px;top:1040.0px;width:30px;height:30px;border-radius:50%;background:conic-gradient(from -60deg,#e33b2e 0 120deg,#fbc116 120deg 240deg,#2fa84f 240deg)"></div><div class="a" style="left:754.0px;top:1048.0px;width:14px;height:14px;border-radius:50%;background:#4a86e8;box-shadow:0 0 0 2.5px #fff"></div>
<div class="a" style="left:809.0px;top:1049.0px;width:30px;height:14px;background:#1f7fd6;border-radius:8px"></div><div class="a" style="left:817.0px;top:1044.0px;width:16px;height:16px;background:#2a8fe0;border-radius:50%"></div>
<div class="a" style="left:872.0px;top:1041.0px;width:28px;height:28px;background:#1ea0e8;border-radius:50% 45% 50% 45%;color:#fff;font-size:20px;font-weight:bold;text-align:center;line-height:28px">S</div>
<svg class="a" style="left:933.0px;top:1040.0px" width="30" height="30" viewBox="0 0 30 30"><path d="M21 1L29 5V25L21 29L7 17L3 20L1 19V11L3 10L7 13ZM21 9L13 15L21 21Z" fill="#8661c5"/><path d="M21 1L29 5V25L21 29Z" fill="#a07de0"/></svg>
<div class="a" style="left:1003.0px;top:1044.0px;width:20px;height:20px;background:#28a8ea;border-radius:2px"></div><div class="a" style="left:997.0px;top:1048.0px;width:14px;height:14px;background:#0a5aa8;color:#fff;font-size:10px;font-weight:bold;text-align:center;line-height:14px">o</div>
<div class="a" style="left:1057.0px;top:1040.0px;width:30px;height:30px;background:#5865f2"></div><svg class="a" style="left:1062.0px;top:1047.0px" width="20" height="16"><path d="M3 2Q10 -1 17 2Q20 8 19 13Q16 15 14 15L13 13Q10 14 7 13L6 15Q4 15 1 13Q0 8 3 2Z" fill="#fff"/><circle cx="7" cy="8.5" r="1.8" fill="#5865f2"/><circle cx="13" cy="8.5" r="1.8" fill="#5865f2"/></svg>
<svg class="a" style="left:1117.0px;top:1040.0px" width="30" height="30" viewBox="0 0 30 30"><path d="M15 2L27 8V22L15 28L3 22V8Z" fill="#1e4a78"/><path d="M15 2L27 8L15 14L3 8Z" fill="#8fb8e0"/><path d="M3 8L15 14V28L3 22Z" fill="#2d6aa8"/></svg>
<div class="a" style="left:1166px;top:1030px;width:61px;height:50px;background:#e6eff6"></div>
<div class="a" style="left:1184.0px;top:1043.0px;width:24px;height:20px;background:linear-gradient(#e8f2fa,#b8d4ea);border:1px solid #7a9ab8"></div><svg class="a" style="left:1186.0px;top:1046.0px" width="20" height="14"><path d="M0 10L5 10L8 3L11 12L14 6L20 6" stroke="#3a7ac8" stroke-width="1.5" fill="none"/></svg><div class="a" style="left:1180.0px;top:1050.0px;width:10px;height:14px;background:#c8ccd0;border:1px solid #999"></div><div class="a" style="left:1188.0px;top:1063.0px;width:16px;height:4px;background:#9aa0a8"></div>
<div class="a" style="left:1243.0px;top:1040.0px;width:30px;height:30px;background:#2b2b2b;border-radius:2px"></div><div class="a" style="left:1245.0px;top:1042.0px;width:11px;height:8px;background:#fff;color:#000;font-size:7px;font-weight:bold;line-height:8px">64</div><svg class="a" style="left:1247.0px;top:1046.0px" width="24" height="22"><path d="M2 20L10 12L14 5L22 2L20 8L12 14L6 21Z" fill="#f5a01a"/><circle cx="16" cy="9" r="4" fill="#e0501a"/></svg>
<div class="a" style="left:1304.0px;top:1043.0px;width:30px;height:24px;background:#0c0c0c;border:1px solid #888;box-sizing:border-box"></div><div class="a" style="left:1304.0px;top:1043.0px;width:30px;height:3px;background:#ccc"></div><div class="a" style="left:1307.0px;top:1049.0px;width:10px;height:2px;background:#ccc"></div>
<div class="a" style="left:675px;top:1077px;width:51px;height:3px;background:#1a73c8"></div>
<div class="a" style="left:737px;top:1077px;width:51px;height:3px;background:#1a73c8"></div>
<div class="a" style="left:1109px;top:1077px;width:51px;height:3px;background:#1a73c8"></div>
<div class="a" style="left:1166px;top:1077px;width:61px;height:3px;background:#1a73c8"></div>
<div class="a" style="left:1233px;top:1077px;width:51px;height:3px;background:#1a73c8"></div>
<div class="a" style="left:1295px;top:1077px;width:51px;height:3px;background:#1a73c8"></div>
<svg class="a" style="left:1463px;top:1043px" width="34" height="26"><path d="M2 12H26M6 17H30M10 22H24" stroke="#7a8fa8" stroke-width="3" stroke-linecap="round"/></svg>
<div class="a" style="left:1478px;top:1036px;width:20px;height:20px;border-radius:50%;background:#d8262a;color:#fff;font-size:13px;text-align:center;line-height:20px">1</div>
<div class="a nw" style="left:1505px;top:1044px;font-size:18px;color:#222">33°C</div>
<svg class="a" style="left:1572px;top:1048px" width="18" height="12"><path d="M1 10L9 2L17 10" stroke="#222" stroke-width="1.5" fill="none"/></svg>
<svg class="a" style="left:1602px;top:1043px" width="22" height="24"><rect x="2" y="5" width="12" height="13" rx="2" fill="none" stroke="#222" stroke-width="1.5"/><path d="M14 9L19 6V17L14 14" fill="none" stroke="#222" stroke-width="1.5"/><path d="M4 21Q9 24 14 21M4 2Q9 -1 14 2" stroke="#222" stroke-width="1.2" fill="none"/></svg>
<svg class="a" style="left:1630px;top:1045px" width="26" height="18"><rect x="5" y="4" width="18" height="11" fill="none" stroke="#111" stroke-width="1.5"/><rect x="7" y="6" width="14" height="7" fill="#111"/><rect x="23" y="7" width="2" height="5" fill="#111"/><path d="M3 2V8M1 3V6M5 3V6" stroke="#111" stroke-width="1.2"/></svg>
<svg class="a" style="left:1662px;top:1044px" width="22" height="22"><path d="M2 20A18 18 0 0 1 20 2M6 20A14 14 0 0 1 20 6M10 20A10 10 0 0 1 20 10" stroke="#222" stroke-width="1.5" fill="none"/><circle cx="18" cy="19" r="2" fill="#222"/></svg>
<svg class="a" style="left:1692px;top:1044px" width="24" height="22"><path d="M1 8H5L11 3V19L5 14H1Z" fill="none" stroke="#222" stroke-width="1.5"/><path d="M14 7Q17 11 14 15M17 4Q22 11 17 18" stroke="#222" stroke-width="1.5" fill="none"/></svg>
<div class="a nw" style="left:1727px;top:1045px;font-size:17px;color:#222">ESP</div>
<div class="a nw" style="left:1789px;top:1034px;font-size:16px;color:#222">12:31</div>
<div class="a nw" style="left:1770px;top:1056px;font-size:16px;color:#222">05/06/2024</div>
<svg class="a" style="left:1869px;top:1045px" width="22" height="22"><path d="M1 1H21V15H8L3 20V15H1Z" fill="#111"/><path d="M5 5H17M5 9H17" stroke="#d5e5f0" stroke-width="1.5"/></svg>
<div class="a" style="left:1876px;top:1054px;width:24px;height:24px;border-radius:50%;background:#e5e9ec;border:1px solid #888;box-sizing:border-box;color:#111;font-size:17px;text-align:center;line-height:22px">2</div>
<div class="a" style="left:1913px;top:1030px;width:1px;height:50px;background:#a8b4c0"></div>
<svg class="a" style="left:1577px;top:1008px" width="255" height="22" viewBox="0 0 255 22"><rect x="1" y="1" width="18" height="20" rx="2" fill="#4aa8ea" stroke="#2a78c0"/><circle cx="10" cy="10" r="5" fill="none" stroke="#fff" stroke-width="2.5"/><path d="M6 16L10 11" stroke="#1a4a80" stroke-width="1.5"/><circle cx="34" cy="11" r="9.5" fill="#e4e4e4" stroke="#cfcfcf"/><circle cx="34" cy="11" r="2.5" fill="none" stroke="#c8c8c8"/><path d="M49 5H53L58 1V21L53 17H49Z" fill="#6cc4f0" stroke="#3a90c8" stroke-width=".8"/><rect x="59" y="5" width="9" height="12" fill="#d8d8d8"/><rect x="58" y="18" width="11" height="3" fill="#c8c8c8"/><rect x="78" y="2" width="14" height="11" fill="#4a9ae8" stroke="#2a6ab8"/><rect x="72" y="7" width="14" height="12" fill="#2a7ad8" stroke="#1a5aa8"/><path d="M98 20L104 13L110 7L114 3L118 7L114 11L108 17L102 22Z" fill="#6cc0f0" stroke="#3a8ac8" stroke-width=".8"/><path d="M117 5H126L128 3H139V20H117Z" fill="#e6e6e6" stroke="#d0d0d0"/><rect x="141" y="2" width="19" height="15" fill="#e8f0f8" stroke="#2a6ab8" stroke-width="1.5"/><rect x="144" y="5" width="13" height="9" fill="#2a7ad8"/><rect x="145" y="18" width="11" height="3" fill="#aab"/><rect x="170" y="2" width="14" height="12" fill="#6aa0f0" stroke="#3a70c0"/><rect x="163" y="7" width="15" height="13" fill="#2a70d0" stroke="#1a50a0"/><path d="M187 3L196 2L204 5V20L190 21L185 15Z" fill="#7ad040" stroke="#3a8a20"/><path d="M190 10L194 16L199 7" stroke="#1a5a10" stroke-width="2" fill="none"/><rect x="203" y="1" width="2" height="20" fill="#111"/><circle cx="218" cy="11" r="9.5" fill="#8ac8f0" stroke="#4a90c8"/><path d="M214 14Q220 4 226 8L222 10L228 12L224 18L222 14Q218 18 214 14Z" fill="#5ac040"/><rect x="232" y="1" width="20" height="20" rx="2" fill="#6cc0f0" stroke="#3a90d0"/><path d="M242 4V14M237 10L242 15L247 10" stroke="#0a3a90" stroke-width="2.5" fill="none"/></svg>
<div class="a nw" style="left:1831px;top:1009px;font-size:11.5px;color:#111;transform:scaleY(1.12);transform-origin:0 0">CTRL DERECHA</div><div class="a" style="left:1920px;top:0;width:1920px;height:40px;background:#000"></div>
<div class="a" style="left:1920px;top:40px;width:1920px;height:46px;background:#373737"></div>
<div class="a" style="left:1920px;top:86px;width:1920px;height:1px;background:#4a4a4a"></div>
<div class="a" style="left:1926px;top:6px;width:28px;height:28px;background:#3a3a3a;border-radius:8px"></div>
<svg class="a" style="left:1935px;top:17px" width="10" height="7"><path d="M1 1L5 5L9 1" stroke="#fff" stroke-width="1.8" fill="none"/></svg>
<div class="a" style="left:2413px;top:6px;width:145px;height:34px;background:#373737;border-radius:8px 8px 0 0"></div>
<div class="a" style="left:2405px;top:32px;width:8px;height:8px;background:radial-gradient(circle at 0 0,#000 8px,#373737 8px)"></div>
<div class="a" style="left:2558px;top:32px;width:8px;height:8px;background:radial-gradient(circle at 100% 0,#000 8px,#373737 8px)"></div>
<svg class="a" style="left:1969px;top:13px" width="14" height="14"><circle cx="6" cy="6" r="4" stroke="#3d8ef0" stroke-width="2" fill="none"/><path d="M9 9L13 13" stroke="#3d8ef0" stroke-width="2.2"/></svg>
<div class="a nw" style="left:1992px;top:13px;font-size:13.6px;color:#e3e3e3;width:60px;overflow:hidden;-webkit-mask-image:linear-gradient(90deg,#000 80%,transparent)">Bing</div>
<svg class="a" style="left:2084px;top:15px" width="10" height="10"><path d="M1 1L9 9M9 1L1 9" stroke="#e8e8e8" stroke-width="1.6"/></svg>
<div class="a" style="left:2107px;top:13px;width:1px;height:15px;background:#777"></div>
<svg class="a" style="left:2120px;top:13px" width="14" height="14"><circle cx="6" cy="6" r="4" stroke="#3d8ef0" stroke-width="2" fill="none"/><path d="M9 9L13 13" stroke="#3d8ef0" stroke-width="2.2"/></svg>
<div class="a nw" style="left:2143px;top:13px;font-size:13.6px;color:#e3e3e3;width:60px;overflow:hidden;-webkit-mask-image:linear-gradient(90deg,#000 80%,transparent)">Bing</div>
<svg class="a" style="left:2235px;top:15px" width="10" height="10"><path d="M1 1L9 9M9 1L1 9" stroke="#e8e8e8" stroke-width="1.6"/></svg>
<div class="a" style="left:2258px;top:13px;width:1px;height:15px;background:#777"></div>
<svg class="a" style="left:2271px;top:13px" width="14" height="14"><circle cx="6" cy="6" r="4" stroke="#3d8ef0" stroke-width="2" fill="none"/><path d="M9 9L13 13" stroke="#3d8ef0" stroke-width="2.2"/></svg>
<div class="a nw" style="left:2294px;top:13px;font-size:13.6px;color:#e3e3e3;width:60px;overflow:hidden;-webkit-mask-image:linear-gradient(90deg,#000 80%,transparent)">Bing</div>
<svg class="a" style="left:2386px;top:15px" width="10" height="10"><path d="M1 1L9 9M9 1L1 9" stroke="#e8e8e8" stroke-width="1.6"/></svg>
<svg class="a" style="left:2420px;top:10px" width="18" height="20"><path d="M9 2L16 9L11 14L9 12L12 9L9 6L5 10L10 15L8 18L1 10Z" fill="#0ae98a"/></svg>
<div class="a nw" style="left:2445px;top:13px;font-size:13.6px;color:#fff;width:80px;overflow:hidden;-webkit-mask-image:linear-gradient(90deg,#000 80%,transparent)">Platzi: Cursos o</div>
<svg class="a" style="left:2537px;top:15px" width="10" height="10"><path d="M1 1L9 9M9 1L1 9" stroke="#e8e8e8" stroke-width="1.6"/></svg>
<div class="a" style="left:2572px;top:12px;width:16px;height:16px;background:#d7262b;border-radius:2px"></div><svg class="a" style="left:2574px;top:14px" width="12" height="12"><path d="M2 10L6 2L10 10M3 8H9" stroke="#fff" stroke-width="1.5" fill="none"/></svg>
<div class="a nw" style="left:2596px;top:13px;font-size:13.6px;color:#e3e3e3;width:80px;overflow:hidden;-webkit-mask-image:linear-gradient(90deg,#000 80%,transparent)">infor_nmap6_li</div>
<svg class="a" style="left:2688px;top:15px" width="10" height="10"><path d="M1 1L9 9M9 1L1 9" stroke="#e8e8e8" stroke-width="1.6"/></svg>
<div class="a" style="left:2711px;top:13px;width:1px;height:15px;background:#777"></div>
<svg class="a" style="left:2721px;top:11px" width="18" height="18"><path d="M4 13Q1 13 1 10Q1 7 4 7Q5 3 9 3Q13 3 14 7Q17 7 17 10Q17 13 14 13Z" fill="none" stroke="#c8202a" stroke-width="1.8"/></svg>
<div class="a nw" style="left:2746px;top:13px;font-size:13.6px;color:#e3e3e3;width:80px;overflow:hidden;-webkit-mask-image:linear-gradient(90deg,#000 80%,transparent)">TryHackMe | Cy</div>
<svg class="a" style="left:2838px;top:15px" width="10" height="10"><path d="M1 1L9 9M9 1L1 9" stroke="#e8e8e8" stroke-width="1.6"/></svg>
<div class="a" style="left:2861px;top:13px;width:1px;height:15px;background:#777"></div>
<div class="a" style="left:2872px;top:11px;width:18px;height:18px;border-radius:50%;border:2px solid #555;box-sizing:border-box"></div>
<div class="a nw" style="left:2897px;top:13px;font-size:13.6px;color:#e3e3e3;width:80px;overflow:hidden;-webkit-mask-image:linear-gradient(90deg,#000 80%,transparent)">GitHub - Cisco</div>
<svg class="a" style="left:2989px;top:15px" width="10" height="10"><path d="M1 1L9 9M9 1L1 9" stroke="#e8e8e8" stroke-width="1.6"/></svg>
<div class="a" style="left:3012px;top:13px;width:1px;height:15px;background:#777"></div>
<div class="a" style="left:3023px;top:11px;width:18px;height:18px;border-radius:50%;background:conic-gradient(from -45deg,#ea4335 0 90deg,#fbbc05 90deg 180deg,#34a853 180deg 270deg,#4285f4 270deg)"></div><div class="a" style="left:3027px;top:15px;width:10px;height:10px;border-radius:50%;background:#000"></div><div class="a" style="left:3032px;top:19px;width:8px;height:3px;background:#4285f4"></div>
<div class="a nw" style="left:3048px;top:13px;font-size:13.6px;color:#e3e3e3;width:80px;overflow:hidden;-webkit-mask-image:linear-gradient(90deg,#000 80%,transparent)">Cómo comprob</div>
<svg class="a" style="left:3140px;top:15px" width="10" height="10"><path d="M1 1L9 9M9 1L1 9" stroke="#e8e8e8" stroke-width="1.6"/></svg>
<div class="a" style="left:3163px;top:13px;width:1px;height:15px;background:#777"></div>
<svg class="a" style="left:3177px;top:13px" width="14" height="14"><circle cx="6" cy="6" r="4" stroke="#3d8ef0" stroke-width="2" fill="none"/><path d="M9 9L13 13" stroke="#3d8ef0" stroke-width="2.2"/></svg>
<div class="a nw" style="left:3200px;top:13px;font-size:13.6px;color:#e3e3e3;width:60px;overflow:hidden;-webkit-mask-image:linear-gradient(90deg,#000 80%,transparent)">Bing</div>
<svg class="a" style="left:3292px;top:15px" width="10" height="10"><path d="M1 1L9 9M9 1L1 9" stroke="#e8e8e8" stroke-width="1.6"/></svg>
<div class="a" style="left:3315px;top:13px;width:1px;height:15px;background:#777"></div>
<div class="a" style="left:3326px;top:11px;width:18px;height:18px;border-radius:50%;border:3px solid #d0232a;border-right-color:transparent;box-sizing:border-box"></div>
<div class="a nw" style="left:3351px;top:13px;font-size:13.6px;color:#e3e3e3;width:80px;overflow:hidden;-webkit-mask-image:linear-gradient(90deg,#000 80%,transparent)">FireEye Market</div>
<svg class="a" style="left:3443px;top:15px" width="10" height="10"><path d="M1 1L9 9M9 1L1 9" stroke="#e8e8e8" stroke-width="1.6"/></svg>
<div class="a" style="left:3466px;top:13px;width:1px;height:15px;background:#777"></div>
<div class="a" style="left:3477px;top:11px;width:18px;height:18px;border-radius:50%;background:radial-gradient(circle at 40% 40%,#bfe4ff,#3a86d0 60%,#2a5a90)"></div><div class="a" style="left:3481px;top:14px;width:7px;height:9px;background:#5aa040;border-radius:40%"></div>
<div class="a nw" style="left:3502px;top:13px;font-size:13.6px;color:#e3e3e3;width:80px;overflow:hidden;-webkit-mask-image:linear-gradient(90deg,#000 80%,transparent)">IP Address Loc</div>
<svg class="a" style="left:3594px;top:15px" width="10" height="10"><path d="M1 1L9 9M9 1L1 9" stroke="#e8e8e8" stroke-width="1.6"/></svg>
<svg class="a" style="left:3628px;top:13px" width="15" height="15"><path d="M7.5 1V14M1 7.5H14" stroke="#e8e8e8" stroke-width="1.5"/></svg>
<div class="a" style="left:3718px;top:20px;width:14px;height:1px;background:#bbb"></div>
<div class="a" style="left:3767px;top:16px;width:8px;height:8px;border:1px solid #999"></div><div class="a" style="left:3769px;top:14px;width:8px;height:8px;border-top:1px solid #999;border-right:1px solid #999"></div>
<svg class="a" style="left:3810px;top:13px" width="14" height="14"><path d="M1 1L13 13M13 1L1 13" stroke="#bbb" stroke-width="1.2"/></svg>
<svg class="a" style="left:1934px;top:56px" width="16" height="15"><path d="M15 7.5H2M8 1.5L2 7.5L8 13.5" stroke="#eee" stroke-width="2" fill="none"/></svg>
<svg class="a" style="left:1970px;top:56px" width="16" height="15"><path d="M1 7.5H14M8 1.5L14 7.5L8 13.5" stroke="#888" stroke-width="2" fill="none"/></svg>
<svg class="a" style="left:2006px;top:55px" width="17" height="17"><path d="M14 8.5A5.5 5.5 0 1 1 11 3.6" stroke="#eee" stroke-width="2" fill="none"/><path d="M9 1H15V7Z" fill="#eee"/></svg>
<div class="a" style="left:2041px;top:46px;width:1520px;height:34px;background:#202124;border-radius:17px"></div>
<div class="a" style="left:2043px;top:48px;width:30px;height:30px;background:#363636;border-radius:50%"></div>
<svg class="a" style="left:2050px;top:56px" width="16" height="14"><path d="M1 3H8M12 3H15M1 11H4M8 11H15" stroke="#eee" stroke-width="1.6"/><circle cx="10" cy="3" r="2" fill="none" stroke="#eee" stroke-width="1.5"/><circle cx="6" cy="11" r="2" fill="none" stroke="#eee" stroke-width="1.5"/></svg>
<div class="a nw" style="left:2077px;top:55px;font-size:14.2px;color:#e8e8e8;letter-spacing:-0.1px">platzi.com<span style="color:#9aa0a6">/new-home/clases/2984-inteligencia-activa/48374-full-tcp-scan-vs-stealth-scan/</span></div>
<svg class="a" style="left:3529px;top:54px" width="18" height="18"><path d="M9 1.5L11.2 6.5L16.5 7L12.5 10.5L13.7 16L9 13.2L4.3 16L5.5 10.5L1.5 7L6.8 6.5Z" fill="none" stroke="#eee" stroke-width="1.5"/></svg>
<div class="a" style="left:3579px;top:54px;width:18px;height:18px;background:#d7262b;border-radius:2px"></div><svg class="a" style="left:3581px;top:56px" width="14" height="14"><path d="M2 12L7 2L12 12M4 9H10" stroke="#fff" stroke-width="1.6" fill="none"/></svg>
<svg class="a" style="left:3616px;top:53px" width="20" height="20"><path d="M3 6H7V4A2 2 0 0 1 11 4V6H15V10H17A2 2 0 0 1 17 14H15V18H3V14H5A2 2 0 0 0 5 10H3Z" fill="none" stroke="#eee" stroke-width="1.7"/></svg>
<div class="a" style="left:3650px;top:55px;width:2px;height:17px;background:#111"></div>
<svg class="a" style="left:3669px;top:54px" width="18" height="17"><path d="M1 3H11M1 7H11M1 11H7" stroke="#eee" stroke-width="1.8"/><path d="M14 2V12A2 2 0 1 1 12 10M14 2H17" stroke="#eee" stroke-width="1.8" fill="none"/></svg>
<div class="a" style="left:3702px;top:47px;width:93px;height:32px;background:#34373d;border-radius:16px"></div>
<div class="a" style="left:3710px;top:52px;width:22px;height:22px;background:radial-gradient(circle at 45% 45%,#d8b8a0 0 25%,#2a2020 27% 60%,#c8c8c8 62%);border-radius:50%"></div>
<div class="a nw" style="left:3736px;top:56px;font-size:12.6px;color:#a8bfe6">En pausa</div>
<svg class="a" style="left:3816px;top:54px" width="4" height="18"><circle cx="2" cy="2.5" r="2" fill="#eee"/><circle cx="2" cy="9" r="2" fill="#eee"/><circle cx="2" cy="15.5" r="2" fill="#eee"/></svg><div class="a" style="left:1920px;top:87px;width:1920px;height:953px;background:#13161d"></div>
<div class="a" style="left:3831px;top:87px;width:9px;height:953px;background:#1f2226"></div>
<svg class="a" style="left:1944px;top:101px" width="26" height="28"><path d="M15 23L5 13L13 5L21 12L14.5 18.5" fill="none" stroke="#14e28e" stroke-width="3.6" stroke-linejoin="round" stroke-linecap="round"/></svg>
<svg class="a" style="left:1946px;top:159px" width="22" height="22"><path d="M2 10L11 2L20 10V20H14V14H8V20H2Z" fill="none" stroke="#9aa0a8" stroke-width="2" stroke-linejoin="round"/></svg>
<svg class="a" style="left:1946px;top:208px" width="22" height="24"><rect x="1.5" y="9" width="19" height="13" rx="3" fill="none" stroke="#9aa0a8" stroke-width="2"/><path d="M4 5H18M7 1.5H15" stroke="#9aa0a8" stroke-width="2"/></svg>
<svg class="a" style="left:1945px;top:259px" width="24" height="22"><rect x="1.5" y="1.5" width="21" height="19" rx="5" fill="none" stroke="#9aa0a8" stroke-width="2"/><path d="M6 14L10 9L13 12L18 7" stroke="#9aa0a8" stroke-width="2" fill="none"/></svg>
<svg class="a" style="left:1945px;top:309px" width="24" height="24"><path d="M9 1L11 8L18 10L11 12L9 19L7 12L0 10L7 8Z" fill="none" stroke="#9aa0a8" stroke-width="1.8"/><path d="M19 15L20 18L23 19L20 20L19 23L18 20L15 19L18 18Z" fill="#9aa0a8"/></svg>
<svg class="a" style="left:1946px;top:984px" width="22" height="22"><path d="M1 1H21V16H6L1 21Z" fill="#9aa0a8"/><path d="M5 6H17M5 10H14" stroke="#13161d" stroke-width="1.8"/></svg>
<div class="a" style="left:2008px;top:101px;width:1807px;height:56px;background:#1e2128;border-radius:10px"></div>
<div class="a" style="left:2023px;top:118px;width:21px;height:21px;border-radius:50%;background:#3ad36a"></div>
<div class="a" style="left:2027px;top:122px;width:13px;height:13px;border-radius:50%;border:2px solid #1e2128;box-sizing:border-box"></div>
<div class="a nw" style="left:2056px;top:118px;font-size:16.4px;color:#d6d9de">Curso de Escaneo Activo y Análisis de Vulnerabilidades</div>
<div class="a nw" style="left:2476px;top:120px;font-size:13px;color:#9aa0a8;letter-spacing:0.5px">37%</div>
<div class="a" style="left:2508px;top:127px;width:121px;height:4px;background:#2b2e36;border-radius:2px"></div>
<div class="a" style="left:2508px;top:127px;width:44px;height:4px;background:#26dc8c;border-radius:2px"></div>
<div class="a" style="left:3471px;top:109px;width:67px;height:40px;background:#393c44;border-radius:8px"></div>
<svg class="a" style="left:3487px;top:123px" width="11" height="12"><rect x="0" y="0" width="2" height="12" fill="#fff"/><path d="M11 0V12L3 6Z" fill="#fff"/></svg>
<div class="a nw" style="left:3503px;top:117px;font-size:17px;color:#f2f2f2">13</div>
<div class="a" style="left:3546px;top:111px;width:43px;height:36px;background:#393c44;border:1.5px solid #2fd38b;border-radius:7px;box-sizing:border-box"></div>
<div class="a nw" style="left:3558px;top:118px;font-size:17px;color:#f2f2f2">14</div>
<div class="a" style="left:3597px;top:109px;width:68px;height:40px;background:#393c44;border-radius:8px"></div>
<div class="a nw" style="left:3613px;top:117px;font-size:17px;color:#f2f2f2">15</div>
<svg class="a" style="left:3639px;top:123px" width="11" height="12"><path d="M0 0V12L8 6Z" fill="#fff"/><rect x="9" y="0" width="2" height="12" fill="#fff"/></svg>
<div class="a" style="left:3681px;top:110px;width:119px;height:38px;background:#393c44;border-radius:8px"></div>
<div class="a nw" style="left:3696px;top:120px;font-size:14.5px;color:#f2f2f2">Ver clases</div>
<svg class="a" style="left:3773px;top:126px" width="10" height="7"><path d="M1 1L5 5L9 1" stroke="#fff" stroke-width="1.6" fill="none"/></svg>
<div class="a nw" style="left:2232px;top:897px;font-size:21.2px;color:#f0f2f5">Full TCP scan vs Stealth scan</div>
<div class="a nw" style="left:2232px;top:925px;font-size:12.8px;color:#8a9099">Publicado el 04 de mayo de 2022</div>
<svg class="a" style="left:3030px;top:910px" width="16" height="18"><path d="M2 17V2H13L11 6L13 10H2" fill="none" stroke="#e8e8e8" stroke-width="1.6"/></svg>
<div class="a nw" style="left:2249px;top:977px;font-size:14px;color:#8a9099">Recursos</div>
<div class="a nw" style="left:2356px;top:977px;font-size:14px;color:#f2f2f2">Resumen</div>
<div class="a" style="left:2340px;top:1005px;width:92px;height:2px;background:#f2f2f2"></div>
<div class="a" style="left:2233px;top:1007px;width:816px;height:1px;background:#2a2d35"></div><div class="a" style="left:2009px;top:166px;width:1276px;height:714px;overflow:hidden;border-radius:8px 8px 0 0">
<div class="a" style="left:0px;top:0px;width:1276px;height:714px;background:#24272f"></div>
<div class="a" style="left:0px;top:0px;width:1276px;height:27px;background:#0a1830"></div>
<div class="a" style="left:0px;top:27px;width:1276px;height:62px;background:#1f2128"></div>
<svg class="a" style="left:11px;top:32px" width="12" height="12"><path d="M1 11C2 6 5 2 11 1C9 4 9 8 10 11Z" fill="#3ec83e"/></svg>
<div class="a nw" style="left:605px;top:31px;font-size:9.5px;color:#c8cad0">*eth0</div>
<div class="a nw" style="left:10px;top:48px;font-size:10.2px;color:#e0e2e6"><u>F</u>ile</div>
<div class="a nw" style="left:35px;top:48px;font-size:10.2px;color:#e0e2e6"><u>E</u>dit</div>
<div class="a nw" style="left:62px;top:48px;font-size:10.2px;color:#e0e2e6"><u>V</u>iew</div>
<div class="a nw" style="left:93px;top:48px;font-size:10.2px;color:#e0e2e6"><u>G</u>o</div>
<div class="a nw" style="left:116px;top:48px;font-size:10.2px;color:#e0e2e6"><u>C</u>apture</div>
<div class="a nw" style="left:160px;top:48px;font-size:10.2px;color:#e0e2e6"><u>A</u>nalyze</div>
<div class="a nw" style="left:204px;top:48px;font-size:10.2px;color:#e0e2e6"><u>S</u>tatistics</div>
<div class="a nw" style="left:254px;top:48px;font-size:10.2px;color:#e0e2e6"><u>T</u>elephony</div>
<div class="a nw" style="left:309px;top:48px;font-size:10.2px;color:#e0e2e6"><u>W</u>ireless</div>
<div class="a nw" style="left:356px;top:48px;font-size:10.2px;color:#e0e2e6"><u>T</u>ools</div>
<div class="a nw" style="left:390px;top:48px;font-size:10.2px;color:#e0e2e6"><u>H</u>elp</div>
<div class="a" style="left:5px;top:62px;width:1271px;height:1px;background:#3e4149"></div>
<div class="a" style="left:5px;top:87px;width:1271px;height:1px;background:#3e4149"></div>
<div class="a" style="left:-98.4px;top:-19.5px;width:1300px;height:300px;transform:scale(0.44);transform-origin:0 0"><svg class="a" style="left:244px;top:195px" width="34" height="37" viewBox="0 0 34 37"><path d="M2 35C4 22 12 8 32 2C28 10 27 24 31 35Z" fill="#8d9098" stroke="#d9dbe0" stroke-width="2"/></svg>
<div class="a" style="left:294px;top:197px;width:33px;height:33px;box-sizing:border-box;border:4px solid #e0e0e0;background:#e00000"></div>
<svg class="a" style="left:343px;top:195px" width="34" height="37" viewBox="0 0 34 37"><path d="M2 35C4 22 12 8 32 2C28 10 27 24 31 35Z" fill="#3ec83e" stroke="#d0d0d0" stroke-width="2"/><path d="M23 20A6 6 0 1 1 17 14" stroke="#c8c9cc" stroke-width="3" fill="none"/></svg>
<svg class="a" style="left:391px;top:195px" width="37" height="37" viewBox="0 0 37 37"><circle cx="18.5" cy="18.5" r="16" fill="#3a3c42" stroke="#e8e8ea" stroke-width="3"/><circle cx="18.5" cy="18.5" r="8" fill="#e8e8ea"/><rect x="16.5" y="7.5" width="4" height="5" fill="#e8e8ea" transform="rotate(0 18.5 18.5)"/><rect x="16.5" y="7.5" width="4" height="5" fill="#e8e8ea" transform="rotate(45 18.5 18.5)"/><rect x="16.5" y="7.5" width="4" height="5" fill="#e8e8ea" transform="rotate(90 18.5 18.5)"/><rect x="16.5" y="7.5" width="4" height="5" fill="#e8e8ea" transform="rotate(135 18.5 18.5)"/><rect x="16.5" y="7.5" width="4" height="5" fill="#e8e8ea" transform="rotate(180 18.5 18.5)"/><rect x="16.5" y="7.5" width="4" height="5" fill="#e8e8ea" transform="rotate(225 18.5 18.5)"/><rect x="16.5" y="7.5" width="4" height="5" fill="#e8e8ea" transform="rotate(270 18.5 18.5)"/><rect x="16.5" y="7.5" width="4" height="5" fill="#e8e8ea" transform="rotate(315 18.5 18.5)"/><circle cx="18.5" cy="18.5" r="4" fill="#3a3c42"/></svg>
<svg class="a" style="left:459px;top:202px" width="24" height="24" viewBox="0 0 24 24"><path d="M2 2H18V10M2 2V20H8" stroke="#e6e6e6" stroke-width="3" fill="none"/><path d="M8 9H15L22 13V24H8Z" fill="#e6e6e6"/></svg>
<svg class="a" style="left:504px;top:195px" width="31" height="37" viewBox="0 0 31 37"><path d="M1 1H22L30 9V36H1Z" fill="#f3f0de" stroke="#c9c7b8"/><path d="M1 1H22L30 9V12H1Z" fill="#4aa8e0"/><g fill="#b9b9a8"><rect x="6" y="16" width="4" height="3"/><rect x="12" y="16" width="4" height="3"/><rect x="18" y="16" width="4" height="3"/><rect x="6" y="22" width="4" height="3"/><rect x="12" y="22" width="4" height="3"/><rect x="18" y="22" width="4" height="3"/><rect x="6" y="28" width="4" height="3"/><rect x="12" y="28" width="4" height="3"/><rect x="18" y="28" width="4" height="3"/></g></svg>
<svg class="a" style="left:553px;top:195px" width="31" height="37" viewBox="0 0 31 37"><path d="M1 1H22L30 9V36H1Z" fill="#f3f0de" stroke="#c9c7b8"/><path d="M1 1H22L30 9V12H1Z" fill="#4aa8e0"/><g fill="#b9b9a8"><rect x="6" y="16" width="4" height="3"/><rect x="12" y="16" width="4" height="3"/><rect x="18" y="16" width="4" height="3"/><rect x="6" y="22" width="4" height="3"/><rect x="12" y="22" width="4" height="3"/><rect x="18" y="22" width="4" height="3"/><rect x="6" y="28" width="4" height="3"/><rect x="12" y="28" width="4" height="3"/><rect x="18" y="28" width="4" height="3"/></g><path d="M5 10L26 33M26 10L5 33" stroke="#1a1a1a" stroke-width="3"/></svg>
<svg class="a" style="left:603px;top:195px" width="31" height="37" viewBox="0 0 31 37"><path d="M1 1H22L30 9V36H1Z" fill="#f3f0de" stroke="#c9c7b8"/><path d="M1 1H22L30 9V12H1Z" fill="#4aa8e0"/><g fill="#b9b9a8"><rect x="6" y="16" width="4" height="3"/><rect x="12" y="16" width="4" height="3"/><rect x="18" y="16" width="4" height="3"/><rect x="6" y="22" width="4" height="3"/><rect x="12" y="22" width="4" height="3"/><rect x="18" y="22" width="4" height="3"/><rect x="6" y="28" width="4" height="3"/><rect x="12" y="28" width="4" height="3"/><rect x="18" y="28" width="4" height="3"/></g><path d="M23 25A9 9 0 1 1 15 11" stroke="#2a5fb8" stroke-width="3.5" fill="none"/><path d="M13 6L19 11L13 16Z" fill="#2a5fb8"/></svg>
<svg class="a" style="left:666px;top:202px" width="24" height="24"><circle cx="9" cy="9" r="6.5" stroke="#e8e8ea" stroke-width="3" fill="none"/><path d="M14 14L22 22" stroke="#e8e8ea" stroke-width="3.5"/></svg>
<svg class="a" style="left:717px;top:203px" width="22" height="20"><path d="M20 10H3M11 2L3 10L11 18" stroke="#e8e8ea" stroke-width="3" fill="none"/></svg>
<svg class="a" style="left:767px;top:203px" width="22" height="20"><path d="M2 10H19M11 2L19 10L11 18" stroke="#e8e8ea" stroke-width="3" fill="none"/></svg>
<svg class="a" style="left:816px;top:201px" width="22" height="23"><path d="M3 17V9A6.5 6.5 0 0 1 16 9V17" stroke="#e8e8ea" stroke-width="3" fill="none"/><path d="M10 15L16 22L21 15" stroke="#e8e8ea" stroke-width="3" fill="none"/></svg>
<svg class="a" style="left:863px;top:203px" width="27" height="20"><circle cx="4" cy="10" r="3" fill="#e8e8ea"/><path d="M25 10H10M17 2L9 10L17 18" stroke="#e8e8ea" stroke-width="3" fill="none"/></svg>
<svg class="a" style="left:912px;top:203px" width="27" height="20"><circle cx="23" cy="10" r="3" fill="#e8e8ea"/><path d="M2 10H17M10 2L18 10L10 18" stroke="#e8e8ea" stroke-width="3" fill="none"/></svg>
<div class="a" style="left:952px;top:193px;width:43px;height:42px;border:1px solid #30333b;border-radius:4px;box-sizing:border-box"></div>
<div class="a" style="left:958px;top:198px;width:34px;height:31px;background:repeating-linear-gradient(#f3f1ea 0 3px,#c9c6bd 3px 5px)"></div>
<div class="a" style="left:973px;top:222px;width:18px;height:8px;background:#2a64c0;clip-path:polygon(0 0,100% 0,60% 100%,40% 100%)"></div>
<div class="a" style="left:1012px;top:193px;width:44px;height:42px;border:1px solid #30333b;border-radius:4px;box-sizing:border-box"></div>
<div class="a" style="left:1018px;top:198px;width:34px;height:31px;background:linear-gradient(#f3f1ea 0 2px,#e05050 2px 5px,#f3f1ea 5px 9px,#4a7fd0 9px 12px,#f3f1ea 12px 15px,#6acb4a 15px 18px,#f3f1ea 18px 21px,#4a7fd0 21px 24px,#f3f1ea 24px 27px,#e8c060 27px 30px,#f3f1ea 30px)"></div>
<div class="a" style="left:1086px;top:204px;width:18px;height:18px;background:#f2f2f2;border-radius:1px;color:#111;font-weight:bold;font-size:17px;line-height:18px;text-align:center">+</div>
<div class="a" style="left:1136px;top:204px;width:18px;height:18px;background:#f2f2f2;border-radius:1px;color:#111;font-weight:bold;font-size:17px;line-height:18px;text-align:center">−</div>
<div class="a" style="left:1185px;top:204px;width:18px;height:18px;background:#f2f2f2;border-radius:1px;color:#111;font-weight:bold;font-size:17px;line-height:18px;text-align:center">1</div>
<div class="a" style="left:1227px;top:198px;width:33px;height:30px;background:repeating-linear-gradient(#f1efe8 0 3px,#cfccc3 3px 5px)"></div>
<div class="a" style="left:1236px;top:198px;width:2px;height:30px;background:#888"></div><div class="a" style="left:1249px;top:198px;width:2px;height:30px;background:#888"></div>
<div class="a" style="left:1229px;top:201px;width:6px;height:9px;background:#2a64c0;clip-path:polygon(0 0,100% 50%,0 100%)"></div><div class="a" style="left:1252px;top:201px;width:6px;height:9px;background:#2a64c0;clip-path:polygon(100% 0,0 50%,100% 100%)"></div></div>
<div class="a" style="left:8px;top:89px;width:1268px;height:17px;background:#2a2d33;border:1px solid #8a8d93;box-sizing:border-box;border-radius:3px"></div>
<div class="a" style="left:20px;top:90px;width:1256px;height:15px;background:#006400"></div>
<div class="a" style="left:12px;top:91px;width:5px;height:11px;background:#8ab4f0"></div>
<div class="a nw" style="left:22px;top:92px;font-size:10.2px;color:#fff;letter-spacing:-0.2px">tcp.port == 80</div>
<div class="a" style="left:2px;top:108px;width:1274px;height:16px;background:#1f2128"></div>
<div class="a nw" style="left:5px;top:110px;font-size:10.2px;color:#e0e2e6">No.</div>
<div class="a nw" style="left:58px;top:110px;font-size:10.2px;color:#e0e2e6">Time</div>
<div class="a nw" style="left:141px;top:110px;font-size:10.2px;color:#e0e2e6">Source</div>
<div class="a nw" style="left:265px;top:110px;font-size:10.2px;color:#e0e2e6">Destination</div>
<div class="a nw" style="left:390px;top:110px;font-size:10.2px;color:#e0e2e6">Protocol</div>
<div class="a nw" style="left:437px;top:110px;font-size:10.2px;color:#e0e2e6">Length</div>
<div class="a nw" style="left:472px;top:110px;font-size:10.2px;color:#e0e2e6">Info</div>
<div class="a m nw" style="left:2px;top:124.0px;width:1274px;height:11.78px;background:#3a7cf0;color:#e6eeff;font-size:9.8px;line-height:11.78px;overflow:hidden"><span class="a" style="left:35px">435</span><span class="a" style="left:58px">185.493880914</span><span class="a" style="left:140px">192.168.0.21</span><span class="a" style="left:264px">192.168.0.1</span><span class="a" style="left:389px">TCP</span><span class="a" style="left:456px">74</span><span class="a" style="left:471px">49122 → 80 [SYN] Seq=0 Win=64240 Len=0 MSS=1460 SACK_PERM=1 TSval=982398476 TSecr=0 WS=128</span></div>
<div class="a m nw" style="left:2px;top:135.8px;width:1274px;height:11.78px;background:#e3f8c8;color:#1a2530;font-size:9.8px;line-height:11.78px;overflow:hidden"><span class="a" style="left:35px">437</span><span class="a" style="left:58px">185.499427665</span><span class="a" style="left:140px">192.168.0.1</span><span class="a" style="left:264px">192.168.0.21</span><span class="a" style="left:389px">TCP</span><span class="a" style="left:456px">74</span><span class="a" style="left:471px">80 → 49122 [SYN, ACK] Seq=0 Ack=1 Win=14480 Len=0 MSS=1460 SACK_PERM=1 TSval=90125079 TSecr=982398476</span></div>
<div class="a m nw" style="left:2px;top:147.6px;width:1274px;height:11.78px;background:#e3f8c8;color:#1a2530;font-size:9.8px;line-height:11.78px;overflow:hidden"><span class="a" style="left:35px">438</span><span class="a" style="left:58px">185.499599101</span><span class="a" style="left:140px">192.168.0.21</span><span class="a" style="left:264px">192.168.0.1</span><span class="a" style="left:389px">TCP</span><span class="a" style="left:456px">66</span><span class="a" style="left:471px">49122 → 80 [ACK] Seq=1 Ack=1</span></div>
<div class="a m nw" style="left:2px;top:159.3px;width:1274px;height:11.78px;background:#a20a0a;color:#fff6a0;font-size:9.8px;line-height:11.78px;overflow:hidden"><span class="a" style="left:35px">439</span><span class="a" style="left:58px">185.499796661</span><span class="a" style="left:140px">192.168.0.21</span><span class="a" style="left:264px">192.168.0.1</span><span class="a" style="left:389px">TCP</span><span class="a" style="left:456px">54</span><span class="a" style="left:471px">49122 → 80 [RST]</span></div>
<div class="a m nw" style="left:2px;top:171.1px;width:1274px;height:11.78px;background:#e3f8c8;color:#1a2530;font-size:9.8px;line-height:11.78px;overflow:hidden"><span class="a" style="left:35px">448</span><span class="a" style="left:58px">185.556195510</span><span class="a" style="left:140px">192.168.0.21</span><span class="a" style="left:264px">192.168.0.1</span><span class="a" style="left:389px">TCP</span><span class="a" style="left:456px">74</span><span class="a" style="left:471px">49122</span></div>
<div class="a m nw" style="left:2px;top:182.9px;width:1274px;height:11.78px;background:#e3f8c8;color:#1a2530;font-size:9.8px;line-height:11.78px;overflow:hidden"><span class="a" style="left:35px">449</span><span class="a" style="left:58px">185.560023501</span><span class="a" style="left:140px">192.168.0.21</span><span class="a" style="left:264px">192.168.0.1</span><span class="a" style="left:389px">TCP</span><span class="a" style="left:456px">74</span><span class="a" style="left:471px">49122</span></div>
<div class="a m nw" style="left:2px;top:194.7px;width:1274px;height:11.78px;background:#e3f8c8;color:#1a2530;font-size:9.8px;line-height:11.78px;overflow:hidden"><span class="a" style="left:35px">450</span><span class="a" style="left:58px">185.560089312</span><span class="a" style="left:140px">192.168.0.21</span><span class="a" style="left:264px">192.168.0.1</span><span class="a" style="left:389px">TCP</span><span class="a" style="left:456px">74</span><span class="a" style="left:471px">49122</span></div>
<div class="a m nw" style="left:2px;top:206.5px;width:1274px;height:11.78px;background:#a20a0a;color:#fff6a0;font-size:9.8px;line-height:11.78px;overflow:hidden"><span class="a" style="left:35px">451</span><span class="a" style="left:58px">185.560235914</span><span class="a" style="left:140px">192.168.0.21</span><span class="a" style="left:264px">192.168.0.1</span><span class="a" style="left:389px">TCP</span><span class="a" style="left:456px">74</span><span class="a" style="left:471px">49122</span></div>
<div class="a" style="left:11px;top:136px;width:1px;height:29px;background:#333"></div>
<div class="a" style="left:11px;top:164px;width:6px;height:1px;background:#ddd"></div>
<div class="a" style="left:2px;top:266px;width:200px;height:1px;background:#30333a"></div>
<div class="a" style="left:9px;top:271.5px;width:5px;height:6px;background:#bbb;clip-path:polygon(0 0,100% 50%,0 100%)"></div>
<div class="a nw" style="left:19px;top:268.5px;font-family:Liberation Mono;font-size:9.8px;line-height:11.78px;color:#e2e3e5">Frame 435: 74 bytes on wire (59</div>
<div class="a" style="left:9px;top:283.28px;width:5px;height:6px;background:#bbb;clip-path:polygon(0 0,100% 50%,0 100%)"></div>
<div class="a nw" style="left:19px;top:280.28px;font-family:Liberation Mono;font-size:9.8px;line-height:11.78px;color:#e2e3e5">Ethernet II, Src: VMware_09:87</div>
<div class="a" style="left:9px;top:295.06px;width:5px;height:6px;background:#bbb;clip-path:polygon(0 0,100% 50%,0 100%)"></div>
<div class="a nw" style="left:19px;top:292.06px;font-family:Liberation Mono;font-size:9.8px;line-height:11.78px;color:#e2e3e5">Internet Protocol Version 4, S</div>
<div class="a" style="left:17px;top:303.84px;width:185px;height:11.78px;background:#8ab4f8"></div>
<div class="a" style="left:9px;top:306.84px;width:5px;height:6px;background:#bbb;clip-path:polygon(0 0,100% 50%,0 100%)"></div>
<div class="a nw" style="left:19px;top:303.84px;font-family:Liberation Mono;font-size:9.8px;line-height:11.78px;color:#102040">Transmission Control Protocol,</div>
<div class="a" style="left:0px;top:424px;width:42px;height:245px;background:#2a2d35"></div>
<div class="a nw" style="left:11px;top:428.0px;font-family:Liberation Mono;font-size:9.8px;line-height:11px;color:#8a8d94">0000</div>
<div class="a nw" style="left:45px;top:428.0px;font-family:Liberation Mono;font-size:9.8px;line-height:11px;color:#e2e3e5">88 71 b1 75 aa 2e 00 0c  2</div>
<div class="a nw" style="left:11px;top:439.20000000000005px;font-family:Liberation Mono;font-size:9.8px;line-height:11px;color:#8a8d94">0010</div>
<div class="a nw" style="left:45px;top:439.20000000000005px;font-family:Liberation Mono;font-size:9.8px;line-height:11px;color:#e2e3e5">00 3c 26 d0 40 00 40 06  9</div>
<div class="a nw" style="left:11px;top:450.4px;font-family:Liberation Mono;font-size:9.8px;line-height:11px;color:#8a8d94">0020</div>
<div class="a nw" style="left:45px;top:450.4px;font-family:Liberation Mono;font-size:9.8px;line-height:11px;color:#e2e3e5">00 01 bf e2 00 50 de 37  c</div>
<div class="a nw" style="left:11px;top:461.6px;font-family:Liberation Mono;font-size:9.8px;line-height:11px;color:#8a8d94">0030</div>
<div class="a nw" style="left:45px;top:461.6px;font-family:Liberation Mono;font-size:9.8px;line-height:11px;color:#e2e3e5">fa f0 81 95 00 00 02 04  0</div>
<div class="a nw" style="left:11px;top:472.79999999999995px;font-family:Liberation Mono;font-size:9.8px;line-height:11px;color:#8a8d94">0040</div>
<div class="a nw" style="left:45px;top:472.79999999999995px;font-family:Liberation Mono;font-size:9.8px;line-height:11px;color:#e2e3e5">36 0c 00 00 00 00 01 03  0</div>
<div class="a" style="left:198px;top:145px;width:862px;height:465px;background:#262930;box-shadow:0 0 10px rgba(0,0,0,.5)"></div>
<div class="a" style="left:198px;top:145px;width:862px;height:24px;background:#1f2128"></div>
<svg class="a" style="left:207px;top:152px" width="13" height="13"><path d="M1 12C2 7 5 3 12 1C10 5 10 9 11 12Z" fill="#3a80f0"/></svg>
<div class="a nw" style="left:563px;top:149px;font-size:10.2px;color:#e8e8ea;font-weight:bold;letter-spacing:-0.2px">Wireshark · Packet 435 · eth0</div>
<div class="a" style="left:1012px;top:149px;width:12px;height:12px;background:#3a3d44;border-radius:50%"></div>
<div class="a" style="left:223px;top:173.0px;width:826px;height:11.78px;background:#8ab4f8"></div>
<div class="a" style="left:214px;top:177.0px;width:7px;height:5px;background:#ccc;clip-path:polygon(0 0,100% 0,50% 100%)"></div>
<div class="a nw" style="left:224px;top:173.0px;font-family:Liberation Mono;font-size:9.8px;line-height:11.78px;color:#0a1a3a">Transmission Control Protocol, Src Port: 49122, Dst Port: 80, Seq: 0, Len: 0</div>
<div class="a nw" style="left:238px;top:184.77999999999997px;font-family:Liberation Mono;font-size:9.8px;line-height:11.78px;color:#e2e3e5">Source Port: 49122</div>
<div class="a nw" style="left:238px;top:196.56px;font-family:Liberation Mono;font-size:9.8px;line-height:11.78px;color:#e2e3e5">Destination Port: 80</div>
<div class="a nw" style="left:238px;top:208.33999999999997px;font-family:Liberation Mono;font-size:9.8px;line-height:11.78px;color:#e2e3e5">[Stream index: 0]</div>
<div class="a nw" style="left:238px;top:220.12px;font-family:Liberation Mono;font-size:9.8px;line-height:11.78px;color:#e2e3e5">[Conversation completeness: Complete, NO_DATA (39)]</div>
<div class="a nw" style="left:238px;top:231.89999999999998px;font-family:Liberation Mono;font-size:9.8px;line-height:11.78px;color:#e2e3e5">[TCP Segment Len: 0]</div>
<div class="a nw" style="left:238px;top:243.68px;font-family:Liberation Mono;font-size:9.8px;line-height:11.78px;color:#e2e3e5">Sequence Number: 0    (relative sequence number)</div>
<div class="a nw" style="left:238px;top:255.45999999999998px;font-family:Liberation Mono;font-size:9.8px;line-height:11.78px;color:#e2e3e5">Sequence Number (raw): 3728196591</div>
<div class="a nw" style="left:238px;top:267.24px;font-family:Liberation Mono;font-size:9.8px;line-height:11.78px;color:#e2e3e5">[Next Sequence Number: 1    (relative sequence number)]</div>
<div class="a nw" style="left:238px;top:279.02px;font-family:Liberation Mono;font-size:9.8px;line-height:11.78px;color:#e2e3e5">Acknowledgment Number: 0</div>
<div class="a nw" style="left:238px;top:290.8px;font-family:Liberation Mono;font-size:9.8px;line-height:11.78px;color:#e2e3e5">Acknowledgment number (raw): 0</div>
<div class="a nw" style="left:238px;top:302.58px;font-family:Liberation Mono;font-size:9.8px;line-height:11.78px;color:#e2e3e5">1010 .... = Header Length: 40 bytes (10)</div>
<div class="a" style="left:236px;top:314.36px;width:813px;height:11.78px;background:#2f64c8"></div>
<div class="a" style="left:228px;top:317.36px;width:5px;height:7px;background:#ccc;clip-path:polygon(0 0,100% 50%,0 100%)"></div>
<div class="a nw" style="left:238px;top:314.36px;font-family:Liberation Mono;font-size:9.8px;line-height:11.78px;color:#e8eeff">Flags: 0x002 (SYN)</div>
<div class="a nw" style="left:238px;top:326.14px;font-family:Liberation Mono;font-size:9.8px;line-height:11.78px;color:#e2e3e5">Window: 64240</div>
<div class="a nw" style="left:238px;top:337.91999999999996px;font-family:Liberation Mono;font-size:9.8px;line-height:11.78px;color:#e2e3e5">[Calculated window size: 64240]</div>
<div class="a" style="left:209px;top:350px;width:840px;height:211px;background:#2a2d35"></div>
<div class="a" style="left:244px;top:350px;width:805px;height:211px;background:#262930"></div>
<div class="a" style="left:250px;top:353px;width:49px;height:11px;background:#3a7ff6"></div>
<div class="a" style="left:553px;top:353px;width:18px;height:11px;background:#3a7ff6"></div>
<div class="a nw" style="left:215px;top:353.0px;font-family:Liberation Mono;font-size:9.8px;line-height:11px;color:#8a8d94">0000</div>
<div class="a nw" style="left:251px;top:353.0px;font-family:Liberation Mono;font-size:9.8px;line-height:11px;color:#e2e3e5">88 71 b1 75 aa 2e 00 0c  29 09 87 10 08 00 45 00</div>
<div class="a nw" style="left:553px;top:353.0px;font-family:Liberation Mono;font-size:9.8px;line-height:11px;color:#b0b2b8">·q·u·.··  )·····E·</div>
<div class="a nw" style="left:215px;top:364.20000000000005px;font-family:Liberation Mono;font-size:9.8px;line-height:11px;color:#8a8d94">0010</div>
<div class="a nw" style="left:251px;top:364.20000000000005px;font-family:Liberation Mono;font-size:9.8px;line-height:11px;color:#e2e3e5">00 3c 26 d0 40 00 40 06  92 85 c0 a8 00 15 c0 a8</div>
<div class="a nw" style="left:553px;top:364.20000000000005px;font-family:Liberation Mono;font-size:9.8px;line-height:11px;color:#b0b2b8"> <&·@·@·  ········</div>
<div class="a nw" style="left:215px;top:375.4px;font-family:Liberation Mono;font-size:9.8px;line-height:11px;color:#8a8d94">0020</div>
<div class="a nw" style="left:251px;top:375.4px;font-family:Liberation Mono;font-size:9.8px;line-height:11px;color:#e2e3e5">00 01 bf e2 00 50 de 37  c3 ef 00 00 00 00 a0 02</div>
<div class="a nw" style="left:553px;top:375.4px;font-family:Liberation Mono;font-size:9.8px;line-height:11px;color:#b0b2b8">·····P·7  ········</div>
<div class="a nw" style="left:215px;top:386.6px;font-family:Liberation Mono;font-size:9.8px;line-height:11px;color:#8a8d94">0030</div>
<div class="a nw" style="left:251px;top:386.6px;font-family:Liberation Mono;font-size:9.8px;line-height:11px;color:#e2e3e5">fa f0 81 95 00 00 02 04  05 b4 04 02 08 0a 3a 8e</div>
<div class="a nw" style="left:553px;top:386.6px;font-family:Liberation Mono;font-size:9.8px;line-height:11px;color:#b0b2b8">········  ······:·</div>
<div class="a nw" style="left:215px;top:397.79999999999995px;font-family:Liberation Mono;font-size:9.8px;line-height:11px;color:#8a8d94">0040</div>
<div class="a nw" style="left:251px;top:397.79999999999995px;font-family:Liberation Mono;font-size:9.8px;line-height:11px;color:#e2e3e5">36 0c 00 00 00 00 01 03  03 07</div>
<div class="a nw" style="left:553px;top:397.79999999999995px;font-family:Liberation Mono;font-size:9.8px;line-height:11px;color:#b0b2b8">6·······  ··</div>
<div class="a" style="left:940px;top:584px;width:53px;height:18px;background:#2b3340;border:1px solid #7a9ad0;border-radius:3px;box-sizing:border-box"></div>
<div class="a nw" style="left:954px;top:587px;font-size:9.5px;color:#eee">Close</div>
<div class="a" style="left:999px;top:584px;width:50px;height:18px;background:#33363d;border-radius:3px"></div>
<div class="a nw" style="left:1014px;top:587px;font-size:9.5px;color:#eee">Help</div>
<div class="a" style="left:9px;top:668px;width:640px;height:2px;background:#fff"></div>
<div class="a" style="left:649px;top:668px;width:128px;height:2px;background:#8a8d95"></div>
<div class="a" style="left:777px;top:668px;width:490px;height:2px;background:#4a4d55"></div>
<div class="a" style="left:643px;top:664px;width:10px;height:10px;background:#fff;border-radius:50%"></div>
<div class="a" style="left:0px;top:681px;width:1276px;height:12px;background:#0b1426"></div>
<div class="a" style="left:0px;top:693px;width:1276px;height:21px;background:linear-gradient(90deg,#5b7d2b,#557a28 60%,#4e7426)"></div>
<div class="a" style="left:81px;top:693px;width:180px;height:21px;background:repeating-linear-gradient(60deg,rgba(255,255,255,.08) 0 18px,transparent 18px 36px)"></div>
<svg class="a" style="left:15px;top:693px" width="11" height="13"><path d="M1 1L10 6.5L1 12Z" fill="#fff"/></svg>
<svg class="a" style="left:52px;top:691px" width="15" height="16"><path d="M1 5H4L8 1V15L4 11H1Z" fill="#fff"/><path d="M10 4Q13 8 10 12" stroke="#fff" stroke-width="1.5" fill="none"/></svg>
<svg class="a" style="left:79px;top:692px" width="17" height="14"><path d="M8 1L1 7L8 13ZM16 1L9 7L16 13Z" fill="#fff"/></svg>
<svg class="a" style="left:119px;top:692px" width="17" height="14"><path d="M1 1L8 7L1 13ZM9 1L16 7L9 13Z" fill="#fff"/></svg>
<div class="a nw" style="left:169px;top:691px;font-size:10.5px;color:#fff;font-weight:bold;line-height:14px;top:691px">5:15</div>
<div class="a nw" style="left:208px;top:691px;font-size:10.5px;color:#fff;font-weight:bold;line-height:14px;top:691px">/</div>
<div class="a nw" style="left:232px;top:691px;font-size:10.5px;color:#fff;font-weight:bold;line-height:14px;top:691px">10:12</div>
<div class="a nw" style="left:1108px;top:691px;font-size:12px;color:#fff;font-weight:bold;top:690px">1.5x</div>
<svg class="a" style="left:1080px;top:526px" width="140" height="140" viewBox="0 0 140 140"><defs><clipPath id="av"><circle cx="70" cy="70" r="66"/></clipPath></defs><circle cx="70" cy="70" r="68" fill="#e8e8e8"/><g clip-path="url(#av)"><rect width="140" height="140" fill="#2b7656"/><ellipse cx="70" cy="48" rx="24" ry="32" fill="#d9a27e"/><path d="M46 30Q70 -2 96 30L96 12Q70 -8 44 14Z" fill="#1a1414"/><rect x="44" y="39" width="20" height="11" rx="3" fill="none" stroke="#222" stroke-width="2.2"/><path d="M0 140L5 95Q30 80 52 70L70 78L92 70Q130 85 140 140Z" fill="#e8772a"/></g></svg>
</div>
<div class="a" style="left:3296px;top:170px;width:520px;height:30px;background:#1b1e25;border-radius:10px 10px 0 0"></div><div class="a" style="left:3038px;top:185px;width:777px;height:510px;background:#0c0c0c;box-shadow:0 0 0 1px #555"></div>
<div class="a" style="left:3038px;top:185px;width:777px;height:30px;background:#fff"></div>
<div class="a" style="left:3046px;top:193px;width:16px;height:13px;background:#0c0c0c;border:1px solid #777;box-sizing:border-box"></div>
<div class="a" style="left:3046px;top:193px;width:16px;height:3px;background:#ccc"></div>
<div class="a m nw" style="left:3047px;top:196px;font-size:7px;color:#fff;font-weight:bold">C:\</div>
<div class="a nw" style="left:3067px;top:192px;font-size:12.2px;color:#777">Símbolo del sistema</div>
<div class="a" style="left:3694px;top:200px;width:12px;height:1px;background:#777"></div>
<div class="a" style="left:3739px;top:194px;width:11px;height:11px;border:1px solid #777"></div>
<svg class="a" style="left:3784px;top:193px" width="13" height="13"><path d="M1 1L12 12M12 1L1 12" stroke="#777" stroke-width="1.1"/></svg>
<div class="a" style="left:3798px;top:215px;width:17px;height:480px;background:#f0f0f0"></div>
<svg class="a" style="left:3801px;top:221px" width="11" height="8"><path d="M1 7L5.5 2L10 7" stroke="#555" stroke-width="1.5" fill="none"/></svg>
<div class="a" style="left:3800px;top:240px;width:13px;height:16px;background:#c8c8c8"></div>
<div class="a m nw" style="left:3038px;top:215.5px;width:760px;height:479px;overflow:hidden;font-size:13.3px;line-height:16px;color:#2fb32f">Adaptador de LAN inalámbrica Conexión de área local* 2:

   Estado de los medios. . . . . . . . . . . : medios desconectados
   Sufijo DNS específico para la conexión. . :

Adaptador de LAN inalámbrica Wi-Fi:

   Sufijo DNS específico para la conexión. . :
   Dirección IPv6 . . . . . . . . . . : 2800:e2:3780:5297:881d:6929:75f0:4c97
   Dirección IPv6 temporal. . . . . . : 2800:e2:3780:5297:f9a3:ec48:3290:564d
   Vínculo: dirección IPv6 local. . . : fe80::2284:7207:5806:5ce5%14
   Dirección IPv4. . . . . . . . . . . . . . : 192.168.1.9
   Máscara de subred . . . . . . . . . . . . : 255.255.255.0
   Puerta de enlace predeterminada . . . . . : 192.168.1.1


Adaptador de Ethernet Conexión de red Bluetooth:

   Estado de los medios. . . . . . . . . . . : medios desconectados
   Sufijo DNS específico para la conexión. . :

Adaptador de Ethernet VirtualBox Host-Only Network:

   Sufijo DNS específico para la conexión. . :
   Vínculo: dirección IPv6 local. . . : fe80::1c2a:3b4d:8e9f:1a2b%9
   Dirección IPv4. . . . . . . . . . . . . . : 192.168.56.1
   Máscara de subred . . . . . . . . . . . . : 255.255.255.0
   Puerta de enlace predeterminada . . . . . :

C:\Users\USUARIO></div>
<div class="a" style="left:3145px;top:410px;width:666px;height:630px;background:#fff;box-shadow:0 0 0 1px #aaa"></div>
<svg class="a" style="left:3155px;top:417px" width="20" height="17"><rect x="3" y="1" width="16" height="12" fill="#dbe9f5" stroke="#6a8aa8"/><path d="M4 9L8 9L10 4L13 11L15 7L18 7" stroke="#3a7ac8" stroke-width="1.2" fill="none"/><rect x="0" y="6" width="6" height="9" fill="#c0c4c8" stroke="#888"/></svg>
<div class="a nw" style="left:3175px;top:418px;font-size:12.4px;color:#111">Administrador de tareas</div>
<div class="a" style="left:3690px;top:426px;width:13px;height:1.5px;background:#111"></div>
<div class="a" style="left:3736px;top:420px;width:11px;height:11px;border:1.5px solid #111;box-sizing:border-box"></div>
<svg class="a" style="left:3781px;top:419px" width="13" height="13"><path d="M1 1L12 12M12 1L1 12" stroke="#111" stroke-width="1.3"/></svg>
<div class="a nw" style="left:3152px;top:444px;font-size:11.8px;color:#222">Archivo</div>
<div class="a nw" style="left:3203px;top:444px;font-size:11.8px;color:#222">Opciones</div>
<div class="a nw" style="left:3263px;top:444px;font-size:11.8px;color:#222">Vista</div>
<div class="a" style="left:3145px;top:485px;width:666px;height:1px;background:#d9d9d9"></div>
<div class="a" style="left:3147px;top:463px;width:57px;height:23px;background:#fff;border:1px solid #d9d9d9;border-bottom:none;box-sizing:border-box"></div>
<div class="a nw" style="left:3150px;top:467px;font-size:11.8px;color:#222">Procesos</div>
<div class="a" style="left:3208px;top:466px;width:71px;height:19px;background:#f0f0f0;border:1px solid #e0e0e0;box-sizing:border-box"></div>
<div class="a nw" style="left:3212px;top:469px;font-size:11.8px;color:#222">Rendimiento</div>
<div class="a" style="left:3281px;top:466px;width:138px;height:19px;background:#f0f0f0;border:1px solid #e0e0e0;box-sizing:border-box"></div>
<div class="a nw" style="left:3285px;top:469px;font-size:11.8px;color:#222">Historial de aplicaciones</div>
<div class="a" style="left:3421px;top:466px;width:36px;height:19px;background:#f0f0f0;border:1px solid #e0e0e0;box-sizing:border-box"></div>
<div class="a nw" style="left:3425px;top:469px;font-size:11.8px;color:#222">Inicio</div>
<div class="a" style="left:3459px;top:466px;width:56px;height:19px;background:#f0f0f0;border:1px solid #e0e0e0;box-sizing:border-box"></div>
<div class="a nw" style="left:3463px;top:469px;font-size:11.8px;color:#222">Usuarios</div>
<div class="a" style="left:3517px;top:466px;width:49px;height:19px;background:#f0f0f0;border:1px solid #e0e0e0;box-sizing:border-box"></div>
<div class="a nw" style="left:3521px;top:469px;font-size:11.8px;color:#222">Detalles</div>
<div class="a" style="left:3568px;top:466px;width:53px;height:19px;background:#f0f0f0;border:1px solid #e0e0e0;box-sizing:border-box"></div>
<div class="a nw" style="left:3572px;top:469px;font-size:11.8px;color:#222">Servicios</div>
<div class="a" style="left:3380px;top:503px;width:1px;height:42px;background:#e5e5e5"></div>
<div class="a" style="left:3500px;top:503px;width:1px;height:42px;background:#e5e5e5"></div>
<div class="a" style="left:3573px;top:503px;width:1px;height:42px;background:#e5e5e5"></div>
<div class="a" style="left:3646px;top:503px;width:1px;height:42px;background:#e5e5e5"></div>
<div class="a" style="left:3719px;top:503px;width:1px;height:42px;background:#e5e5e5"></div>
<div class="a" style="left:3792px;top:503px;width:1px;height:42px;background:#e5e5e5"></div>
<div class="a" style="left:3145px;top:545px;width:647px;height:1px;background:#c8c8c8"></div>
<svg class="a" style="left:3510px;top:505px" width="10" height="6"><path d="M1 1L5 5L9 1" stroke="#555" stroke-width="1" fill="none"/></svg>
<div class="a nw" style="right:273px;top:502px;font-size:15px;color:#222">9%</div>
<div class="a nw" style="right:200px;top:502px;font-size:15px;color:#222">61%</div>
<div class="a nw" style="right:127px;top:502px;font-size:15px;color:#222">0%</div>
<div class="a nw" style="right:54px;top:502px;font-size:15px;color:#222">0%</div>
<div class="a nw" style="right:273px;top:526px;font-size:11.5px;color:#4a6a8a">CPU</div>
<div class="a nw" style="right:200px;top:526px;font-size:11.5px;color:#4a6a8a">Memoria</div>
<div class="a nw" style="right:127px;top:526px;font-size:11.5px;color:#4a6a8a">Disco</div>
<div class="a nw" style="right:54px;top:526px;font-size:11.5px;color:#4a6a8a">Red</div>
<div class="a nw" style="left:3152px;top:526px;font-size:11.5px;color:#4a6a8a">Nombre</div>
<div class="a nw" style="left:3386px;top:526px;font-size:11.5px;color:#4a6a8a">Estado</div>
<div class="a" style="left:3501px;top:546px;width:72px;height:28px;background:#f9eca6"></div>
<div class="a" style="left:3574px;top:546px;width:72px;height:28px;background:#f7c45c"></div>
<div class="a" style="left:3647px;top:546px;width:72px;height:28px;background:#f9eca6"></div>
<div class="a" style="left:3720px;top:546px;width:72px;height:28px;background:#fff4c4"></div>
<svg class="a" style="left:3155px;top:555px" width="7" height="11"><path d="M1 1L6 5.5L1 10" stroke="#777" stroke-width="1.2" fill="none"/></svg>
<div class="a" style="left:3175px;top:551px;width:17px;height:17px;border-radius:50%;background:conic-gradient(from -60deg,#e33b2e 0 120deg,#fbc116 120deg 240deg,#2fa84f 240deg)"></div><div class="a" style="left:3179px;top:555px;width:9px;height:9px;border-radius:50%;background:#4a86e8;box-shadow:0 0 0 1.5px #fff"></div>
<div class="a nw" style="left:3197px;top:553px;font-size:11.8px;color:#222">Google Chrome (39)</div>
<div class="a nw" style="right:273px;top:553px;font-size:11.8px;color:#222">2.8%</div>
<div class="a nw" style="right:200px;top:553px;font-size:11.8px;color:#222">1,252.3 MB</div>
<div class="a nw" style="right:127px;top:553px;font-size:11.8px;color:#222">0.1 MB/s</div>
<div class="a nw" style="right:54px;top:553px;font-size:11.8px;color:#222">0 Mbps</div>
<div class="a" style="left:3501px;top:574px;width:72px;height:28px;background:#f9eca6"></div>
<div class="a" style="left:3574px;top:574px;width:72px;height:28px;background:#f7c45c"></div>
<div class="a" style="left:3647px;top:574px;width:72px;height:28px;background:#fff4c4"></div>
<div class="a" style="left:3720px;top:574px;width:72px;height:28px;background:#fff4c4"></div>
<svg class="a" style="left:3155px;top:583px" width="7" height="11"><path d="M1 1L6 5.5L1 10" stroke="#777" stroke-width="1.2" fill="none"/></svg>
<svg class="a" style="left:3175px;top:579px" width="17" height="18" viewBox="0 0 30 30"><path d="M15 2L27 8V22L15 28L3 22V8Z" fill="#1e3a68"/><path d="M15 2L27 8L15 14L3 8Z" fill="#8fb8e0"/></svg>
<div class="a nw" style="left:3197px;top:581px;font-size:11.8px;color:#222">VirtualBox Virtual Machine</div>
<div class="a nw" style="right:273px;top:581px;font-size:11.8px;color:#222">2.2%</div>
<div class="a nw" style="right:200px;top:581px;font-size:11.8px;color:#222">1,142.6 MB</div>
<div class="a nw" style="right:127px;top:581px;font-size:11.8px;color:#222">0 MB/s</div>
<div class="a nw" style="right:54px;top:581px;font-size:11.8px;color:#222">0 Mbps</div>
<div class="a" style="left:3501px;top:602px;width:72px;height:28px;background:#f9eca6"></div>
<div class="a" style="left:3574px;top:602px;width:72px;height:28px;background:#f9eca6"></div>
<div class="a" style="left:3647px;top:602px;width:72px;height:28px;background:#fff4c4"></div>
<div class="a" style="left:3720px;top:602px;width:72px;height:28px;background:#fff4c4"></div>
<div class="a" style="left:3175px;top:609px;width:17px;height:14px;background:#fff;border:1px solid #7a8a9a;box-sizing:border-box"></div><div class="a" style="left:3181px;top:612px;width:6px;height:7px;background:#2a7ad8"></div>
<div class="a nw" style="left:3197px;top:609px;font-size:11.8px;color:#222">Administrador de ventanas del ...</div>
<div class="a nw" style="right:273px;top:609px;font-size:11.8px;color:#222">1.4%</div>
<div class="a nw" style="right:200px;top:609px;font-size:11.8px;color:#222">53.8 MB</div>
<div class="a nw" style="right:127px;top:609px;font-size:11.8px;color:#222">0 MB/s</div>
<div class="a nw" style="right:54px;top:609px;font-size:11.8px;color:#222">0 Mbps</div>
<div class="a" style="left:3501px;top:630px;width:72px;height:28px;background:#f9eca6"></div>
<div class="a" style="left:3574px;top:630px;width:72px;height:28px;background:#fff4c4"></div>
<div class="a" style="left:3647px;top:630px;width:72px;height:28px;background:#f9eca6"></div>
<div class="a" style="left:3720px;top:630px;width:72px;height:28px;background:#f9eca6"></div>
<div class="a" style="left:3175px;top:637px;width:17px;height:14px;background:#fff;border:1px solid #7a8a9a;box-sizing:border-box"></div><div class="a" style="left:3181px;top:640px;width:6px;height:7px;background:#2a7ad8"></div>
<div class="a nw" style="left:3197px;top:637px;font-size:11.8px;color:#222">System</div>
<div class="a nw" style="right:273px;top:637px;font-size:11.8px;color:#222">0.9%</div>
<div class="a nw" style="right:200px;top:637px;font-size:11.8px;color:#222">0.1 MB</div>
<div class="a nw" style="right:127px;top:637px;font-size:11.8px;color:#222">0.1 MB/s</div>
<div class="a nw" style="right:54px;top:637px;font-size:11.8px;color:#222">0 Mbps</div>
<div class="a" style="left:3501px;top:658px;width:72px;height:28px;background:#f9eca6"></div>
<div class="a" style="left:3574px;top:658px;width:72px;height:28px;background:#f9eca6"></div>
<div class="a" style="left:3647px;top:658px;width:72px;height:28px;background:#fff4c4"></div>
<div class="a" style="left:3720px;top:658px;width:72px;height:28px;background:#fff4c4"></div>
<svg class="a" style="left:3155px;top:667px" width="7" height="11"><path d="M1 1L6 5.5L1 10" stroke="#777" stroke-width="1.2" fill="none"/></svg>
<svg class="a" style="left:3175px;top:663px" width="18" height="17"><rect x="3" y="1" width="14" height="11" fill="#dbe9f5" stroke="#6a8aa8"/><path d="M4 8L7 8L9 4L11 10L13 6L16 6" stroke="#3a7ac8" stroke-width="1.2" fill="none"/><rect x="0" y="6" width="5" height="9" fill="#c0c4c8" stroke="#888"/></svg>
<div class="a nw" style="left:3197px;top:665px;font-size:11.8px;color:#222">Administrador de tareas</div>
<div class="a nw" style="right:273px;top:665px;font-size:11.8px;color:#222">0.8%</div>
<div class="a nw" style="right:200px;top:665px;font-size:11.8px;color:#222">21.8 MB</div>
<div class="a nw" style="right:127px;top:665px;font-size:11.8px;color:#222">0 MB/s</div>
<div class="a nw" style="right:54px;top:665px;font-size:11.8px;color:#222">0 Mbps</div>
<div class="a" style="left:3501px;top:686px;width:72px;height:28px;background:#f9eca6"></div>
<div class="a" style="left:3574px;top:686px;width:72px;height:28px;background:#fff4c4"></div>
<div class="a" style="left:3647px;top:686px;width:72px;height:28px;background:#fff4c4"></div>
<div class="a" style="left:3720px;top:686px;width:72px;height:28px;background:#fff4c4"></div>
<div class="a" style="left:3175px;top:693px;width:17px;height:14px;background:#fff;border:1px solid #7a8a9a;box-sizing:border-box"></div><div class="a" style="left:3181px;top:696px;width:6px;height:7px;background:#2a7ad8"></div>
<div class="a nw" style="left:3197px;top:693px;font-size:11.8px;color:#222">Windows Driver Foundation - pr...</div>
<div class="a nw" style="right:273px;top:693px;font-size:11.8px;color:#222">0.2%</div>
<div class="a nw" style="right:200px;top:693px;font-size:11.8px;color:#222">0.8 MB</div>
<div class="a nw" style="right:127px;top:693px;font-size:11.8px;color:#222">0 MB/s</div>
<div class="a nw" style="right:54px;top:693px;font-size:11.8px;color:#222">0 Mbps</div>
<div class="a" style="left:3501px;top:714px;width:72px;height:28px;background:#f9eca6"></div>
<div class="a" style="left:3574px;top:714px;width:72px;height:28px;background:#fff4c4"></div>
<div class="a" style="left:3647px;top:714px;width:72px;height:28px;background:#fff4c4"></div>
<div class="a" style="left:3720px;top:714px;width:72px;height:28px;background:#fff4c4"></div>
<div class="a" style="left:3175px;top:720px;width:17px;height:16px;background:#f5c518;border-radius:3px"></div><div class="a" style="left:3179px;top:723px;width:8px;height:8px;border:2px solid #222;border-radius:50%;box-sizing:border-box"></div>
<div class="a nw" style="left:3197px;top:721px;font-size:11.8px;color:#222">PowerToys.Peek.UI</div>
<div class="a nw" style="right:273px;top:721px;font-size:11.8px;color:#222">0.2%</div>
<div class="a nw" style="right:200px;top:721px;font-size:11.8px;color:#222">3.8 MB</div>
<div class="a nw" style="right:127px;top:721px;font-size:11.8px;color:#222">0 MB/s</div>
<div class="a nw" style="right:54px;top:721px;font-size:11.8px;color:#222">0 Mbps</div>
<div class="a" style="left:3501px;top:742px;width:72px;height:28px;background:#f9eca6"></div>
<div class="a" style="left:3574px;top:742px;width:72px;height:28px;background:#f9eca6"></div>
<div class="a" style="left:3647px;top:742px;width:72px;height:28px;background:#f9eca6"></div>
<div class="a" style="left:3720px;top:742px;width:72px;height:28px;background:#fff4c4"></div>
<svg class="a" style="left:3155px;top:751px" width="7" height="11"><path d="M1 1L6 5.5L1 10" stroke="#777" stroke-width="1.2" fill="none"/></svg>
<div class="a" style="left:3175px;top:749px;width:17px;height:14px;background:#fff;border:1px solid #7a8a9a;box-sizing:border-box"></div><div class="a" style="left:3181px;top:752px;width:6px;height:7px;background:#2a7ad8"></div>
<div class="a nw" style="left:3197px;top:749px;font-size:11.8px;color:#222">Antimalware Service Executable</div>
<div class="a nw" style="right:273px;top:749px;font-size:11.8px;color:#222">0.2%</div>
<div class="a nw" style="right:200px;top:749px;font-size:11.8px;color:#222">151.3 MB</div>
<div class="a nw" style="right:127px;top:749px;font-size:11.8px;color:#222">0.1 MB/s</div>
<div class="a nw" style="right:54px;top:749px;font-size:11.8px;color:#222">0 Mbps</div>
<div class="a" style="left:3501px;top:770px;width:72px;height:28px;background:#f9eca6"></div>
<div class="a" style="left:3574px;top:770px;width:72px;height:28px;background:#fff4c4"></div>
<div class="a" style="left:3647px;top:770px;width:72px;height:28px;background:#fff4c4"></div>
<div class="a" style="left:3720px;top:770px;width:72px;height:28px;background:#fff4c4"></div>
<svg class="a" style="left:3155px;top:779px" width="7" height="11"><path d="M1 1L6 5.5L1 10" stroke="#777" stroke-width="1.2" fill="none"/></svg>
<div class="a" style="left:3175px;top:775px;width:18px;height:18px;background:#bcdcf5;border:1px solid #8ab"></div><div class="a" style="left:3179px;top:779px;width:10px;height:10px;border:2.5px dotted #fff;border-radius:50%;box-sizing:border-box"></div>
<div class="a nw" style="left:3197px;top:777px;font-size:11.8px;color:#222">Host de servicio: Llamada a pro...</div>
<div class="a nw" style="right:273px;top:777px;font-size:11.8px;color:#222">0.2%</div>
<div class="a nw" style="right:200px;top:777px;font-size:11.8px;color:#222">9.2 MB</div>
<div class="a nw" style="right:127px;top:777px;font-size:11.8px;color:#222">0 MB/s</div>
<div class="a nw" style="right:54px;top:777px;font-size:11.8px;color:#222">0 Mbps</div>
<div class="a" style="left:3501px;top:798px;width:72px;height:28px;background:#f9eca6"></div>
<div class="a" style="left:3574px;top:798px;width:72px;height:28px;background:#fff4c4"></div>
<div class="a" style="left:3647px;top:798px;width:72px;height:28px;background:#fff4c4"></div>
<div class="a" style="left:3720px;top:798px;width:72px;height:28px;background:#fff4c4"></div>
<div class="a" style="left:3175px;top:803px;width:18px;height:18px;background:radial-gradient(circle at 50% 40%,#e070c0,#8a60c0 50%,#aaa 52%)"></div>
<div class="a nw" style="left:3197px;top:805px;font-size:11.8px;color:#222">Acrobat Collaboration Synchron...</div>
<div class="a nw" style="right:273px;top:805px;font-size:11.8px;color:#222">0.1%</div>
<div class="a nw" style="right:200px;top:805px;font-size:11.8px;color:#222">1.7 MB</div>
<div class="a nw" style="right:127px;top:805px;font-size:11.8px;color:#222">0 MB/s</div>
<div class="a nw" style="right:54px;top:805px;font-size:11.8px;color:#222">0 Mbps</div>
<div class="a" style="left:3501px;top:826px;width:72px;height:28px;background:#f9eca6"></div>
<div class="a" style="left:3574px;top:826px;width:72px;height:28px;background:#fff4c4"></div>
<div class="a" style="left:3647px;top:826px;width:72px;height:28px;background:#fff4c4"></div>
<div class="a" style="left:3720px;top:826px;width:72px;height:28px;background:#fff4c4"></div>
<div class="a" style="left:3175px;top:833px;width:17px;height:14px;background:#fff;border:1px solid #7a8a9a;box-sizing:border-box"></div><div class="a" style="left:3181px;top:836px;width:6px;height:7px;background:#2a7ad8"></div>
<div class="a nw" style="left:3197px;top:833px;font-size:11.8px;color:#222">Interrupciones del sistema</div>
<div class="a nw" style="right:273px;top:833px;font-size:11.8px;color:#222">0.1%</div>
<div class="a nw" style="right:200px;top:833px;font-size:11.8px;color:#222">0 MB</div>
<div class="a nw" style="right:127px;top:833px;font-size:11.8px;color:#222">0 MB/s</div>
<div class="a nw" style="right:54px;top:833px;font-size:11.8px;color:#222">0 Mbps</div>
<div class="a" style="left:3501px;top:854px;width:72px;height:28px;background:#fff4c4"></div>
<div class="a" style="left:3574px;top:854px;width:72px;height:28px;background:#fff4c4"></div>
<div class="a" style="left:3647px;top:854px;width:72px;height:28px;background:#fff4c4"></div>
<div class="a" style="left:3720px;top:854px;width:72px;height:28px;background:#fff4c4"></div>
<div class="a" style="left:3175px;top:861px;width:17px;height:14px;background:#fff;border:1px solid #7a8a9a;box-sizing:border-box"></div><div class="a" style="left:3181px;top:864px;width:6px;height:7px;background:#2a7ad8"></div>
<div class="a nw" style="left:3197px;top:861px;font-size:11.8px;color:#222">Proceso en tiempo de ejecución...</div>
<div class="a nw" style="right:273px;top:861px;font-size:11.8px;color:#222">0%</div>
<div class="a nw" style="right:200px;top:861px;font-size:11.8px;color:#222">0.9 MB</div>
<div class="a nw" style="right:127px;top:861px;font-size:11.8px;color:#222">0 MB/s</div>
<div class="a nw" style="right:54px;top:861px;font-size:11.8px;color:#222">0 Mbps</div>
<div class="a" style="left:3501px;top:882px;width:72px;height:28px;background:#fff4c4"></div>
<div class="a" style="left:3574px;top:882px;width:72px;height:28px;background:#f9eca6"></div>
<div class="a" style="left:3647px;top:882px;width:72px;height:28px;background:#fff4c4"></div>
<div class="a" style="left:3720px;top:882px;width:72px;height:28px;background:#fff4c4"></div>
<svg class="a" style="left:3155px;top:891px" width="7" height="11"><path d="M1 1L6 5.5L1 10" stroke="#777" stroke-width="1.2" fill="none"/></svg>
<div class="a" style="left:3175px;top:889px;width:18px;height:14px;background:#f7cd5a"></div><div class="a" style="left:3179px;top:895px;width:10px;height:8px;border:2px solid #3a8ad8;border-bottom:none;box-sizing:border-box"></div>
<div class="a nw" style="left:3197px;top:889px;font-size:11.8px;color:#222">Explorador de Windows</div>
<div class="a nw" style="right:273px;top:889px;font-size:11.8px;color:#222">0%</div>
<div class="a nw" style="right:200px;top:889px;font-size:11.8px;color:#222">55.3 MB</div>
<div class="a nw" style="right:127px;top:889px;font-size:11.8px;color:#222">0 MB/s</div>
<div class="a nw" style="right:54px;top:889px;font-size:11.8px;color:#222">0 Mbps</div>
<div class="a" style="left:3501px;top:910px;width:72px;height:28px;background:#fff4c4"></div>
<div class="a" style="left:3574px;top:910px;width:72px;height:28px;background:#fff4c4"></div>
<div class="a" style="left:3647px;top:910px;width:72px;height:28px;background:#f9eca6"></div>
<div class="a" style="left:3720px;top:910px;width:72px;height:28px;background:#fff4c4"></div>
<svg class="a" style="left:3155px;top:919px" width="7" height="11"><path d="M1 1L6 5.5L1 10" stroke="#777" stroke-width="1.2" fill="none"/></svg>
<div class="a" style="left:3175px;top:915px;width:18px;height:18px;background:#bcdcf5;border:1px solid #8ab"></div><div class="a" style="left:3179px;top:919px;width:10px;height:10px;border:2.5px dotted #fff;border-radius:50%;box-sizing:border-box"></div>
<div class="a nw" style="left:3197px;top:917px;font-size:11.8px;color:#222">Host del servicio: Servicio de us...</div>
<div class="a nw" style="right:273px;top:917px;font-size:11.8px;color:#222">0%</div>
<div class="a nw" style="right:200px;top:917px;font-size:11.8px;color:#222">6.5 MB</div>
<div class="a nw" style="right:127px;top:917px;font-size:11.8px;color:#222">0.1 MB/s</div>
<div class="a nw" style="right:54px;top:917px;font-size:11.8px;color:#222">0 Mbps</div>
<div class="a" style="left:3501px;top:938px;width:72px;height:28px;background:#fff4c4"></div>
<div class="a" style="left:3574px;top:938px;width:72px;height:28px;background:#fff4c4"></div>
<div class="a" style="left:3647px;top:938px;width:72px;height:28px;background:#fff4c4"></div>
<div class="a" style="left:3720px;top:938px;width:72px;height:28px;background:#fff4c4"></div>
<div class="a" style="left:3175px;top:943px;width:17px;height:17px;background:#fff;border:1px solid #666;box-sizing:border-box"></div><div class="a" style="left:3183px;top:941px;width:3px;height:18px;background:#1a3a8a;transform:rotate(40deg)"></div>
<div class="a nw" style="left:3197px;top:945px;font-size:11.8px;color:#222">Cargador de CTF</div>
<div class="a nw" style="right:273px;top:945px;font-size:11.8px;color:#222">0%</div>
<div class="a nw" style="right:200px;top:945px;font-size:11.8px;color:#222">1.9 MB</div>
<div class="a nw" style="right:127px;top:945px;font-size:11.8px;color:#222">0 MB/s</div>
<div class="a nw" style="right:54px;top:945px;font-size:11.8px;color:#222">0 Mbps</div>
<div class="a" style="left:3501px;top:966px;width:72px;height:28px;background:#fff4c4"></div>
<div class="a" style="left:3574px;top:966px;width:72px;height:28px;background:#fff4c4"></div>
<div class="a" style="left:3647px;top:966px;width:72px;height:28px;background:#fff4c4"></div>
<div class="a" style="left:3720px;top:966px;width:72px;height:28px;background:#fff4c4"></div>
<div class="a" style="left:3175px;top:973px;width:18px;height:14px;background:#111"></div>
<div class="a nw" style="left:3197px;top:973px;font-size:11.8px;color:#222">Host de ventana de consola</div>
<div class="a nw" style="right:273px;top:973px;font-size:11.8px;color:#222">0%</div>
<div class="a nw" style="right:200px;top:973px;font-size:11.8px;color:#222">0.9 MB</div>
<div class="a nw" style="right:127px;top:973px;font-size:11.8px;color:#222">0 MB/s</div>
<div class="a nw" style="right:54px;top:973px;font-size:11.8px;color:#222">0 Mbps</div>
<div class="a" style="left:3792px;top:546px;width:17px;height:444px;background:#f0f0f0"></div>
<svg class="a" style="left:3795px;top:550px" width="11" height="8"><path d="M1 7L5.5 2L10 7" stroke="#555" stroke-width="1.3" fill="none"/></svg>
<div class="a" style="left:3794px;top:565px;width:13px;height:36px;background:#c8c8c8"></div>
<svg class="a" style="left:3795px;top:980px" width="11" height="8"><path d="M1 1L5.5 6L10 1" stroke="#555" stroke-width="1.3" fill="none"/></svg>
<div class="a" style="left:3145px;top:992px;width:647px;height:16px;background:#f0f0f0"></div>
<svg class="a" style="left:3150px;top:993px" width="8" height="11"><path d="M7 1L2 5.5L7 10" stroke="#555" stroke-width="1.3" fill="none"/></svg>
<div class="a" style="left:3165px;top:994px;width:355px;height:13px;background:#c8c8c8"></div>
<svg class="a" style="left:3782px;top:993px" width="8" height="11"><path d="M1 1L6 5.5L1 10" stroke="#555" stroke-width="1.3" fill="none"/></svg>
<div class="a" style="left:3145px;top:1008px;width:666px;height:1px;background:#ddd"></div>
<div class="a" style="left:3155px;top:1026px;width:16px;height:16px;border:1px solid #777;border-radius:50%;box-sizing:border-box"></div>
<div class="a nw" style="left:3180px;top:1027px;font-size:11.8px;color:#222">Menos detalles</div>
<div class="a" style="left:3720px;top:1023px;width:83px;height:19px;background:#cfcfcf;border:1px solid #bbb;box-sizing:border-box"></div>
<div class="a nw" style="left:3724px;top:1025px;font-size:11.5px;color:#8a8a8a">Finalizar tarea</div><div class="a" style="left:1920px;top:1040px;width:1920px;height:40px;background:#d5e5f0"></div>
<svg class="a" style="left:1935.0px;top:1051.0px" width="18" height="18" viewBox="0 0 20 20"><path d="M0 3L8 2V9.5H0ZM9 1.8L20 0V9.5H9ZM0 10.5H8V18L0 17ZM9 10.5H20V20L9 18.2Z" fill="#111"/></svg>
<svg class="a" style="left:1981.0px;top:1049.0px" width="22" height="22" viewBox="0 0 30 30"><circle cx="18" cy="11" r="8" fill="none" stroke="#111" stroke-width="2.2"/><path d="M12 17L3 27" stroke="#111" stroke-width="2.2"/></svg>
<svg class="a" style="left:2030.0px;top:1052.0px" width="24" height="22"><rect x="1" y="4" width="15" height="14" fill="none" stroke="#111" stroke-width="1.5"/><path d="M1 1H16M1 21H16M21 1V21" stroke="#111" stroke-width="1.5"/><rect x="19.5" y="9" width="3" height="3" fill="#111"/></svg>
<div class="a" style="left:2082.5px;top:1046.5px;width:20px;height:25px;background:linear-gradient(90deg,#21a366 0 40%,#107c41 40%);border-radius:2px"></div><div class="a" style="left:2077.5px;top:1053.5px;width:15px;height:16px;background:#185c37;color:#fff;font-size:12px;font-weight:bold;text-align:center;line-height:16px">x</div>
<div class="a" style="left:2126.5px;top:1046.5px;width:25px;height:25px;background:#243a4f;border:1px solid #111;box-sizing:border-box"></div><div class="a" style="left:2131.5px;top:1051.5px;width:20px;height:20px;border:2px solid #e8c860;border-radius:50%;box-sizing:border-box"></div><div class="a" style="left:2141.5px;top:1051.5px;width:2px;height:20px;background:#e8c860"></div><div class="a" style="left:2141.5px;top:1060.5px;width:10px;height:2px;background:#e8c860"></div>
<svg class="a" style="left:2175.5px;top:1046.5px" width="25" height="25" viewBox="0 0 30 30"><defs><linearGradient id="eg2188" x1="0" y1="1" x2="1" y2="0"><stop offset="0" stop-color="#0c59a4"/><stop offset=".5" stop-color="#1e90e0"/><stop offset="1" stop-color="#5ed47a"/></linearGradient></defs><circle cx="15" cy="15" r="14" fill="url(#eg2188)"/><path d="M8 18Q8 11 15 11Q21 11 22 16Q22 19 17 19Q13 19 13 22Q14 26 20 27Q10 29 6 22Z" fill="#d4e4ef" opacity=".9"/><path d="M13 22Q13 19 17 19Q22 19 22 16" fill="none" stroke="#0c4a90" stroke-width="2"/></svg>
<div class="a" style="left:2224.5px;top:1048.5px;width:12px;height:5px;background:#e8a820;border-radius:2px"></div><div class="a" style="left:2224.5px;top:1051.5px;width:25px;height:22px;background:#f7cd5a;border-radius:2px"></div><div class="a" style="left:2231.5px;top:1060.5px;width:16px;height:12px;border:3px solid #3a8ad8;border-bottom:none;box-sizing:border-box"></div>
<div class="a" style="left:2273.5px;top:1046.5px;width:25px;height:25px;border-radius:50%;background:conic-gradient(from -60deg,#e33b2e 0 120deg,#fbc116 120deg 240deg,#2fa84f 240deg)"></div><div class="a" style="left:2281.5px;top:1054.5px;width:14px;height:14px;border-radius:50%;background:#4a86e8;box-shadow:0 0 0 2.5px #fff"></div>
<div class="a" style="left:2322.5px;top:1055.5px;width:25px;height:14px;background:#1f7fd6;border-radius:8px"></div><div class="a" style="left:2330.5px;top:1050.5px;width:16px;height:16px;background:#2a8fe0;border-radius:50%"></div>
<div class="a" style="left:2372.5px;top:1047.5px;width:23px;height:23px;background:#1ea0e8;border-radius:50% 45% 50% 45%;color:#fff;font-size:20px;font-weight:bold;text-align:center;line-height:28px">S</div>
<svg class="a" style="left:2420.5px;top:1046.5px" width="25" height="25" viewBox="0 0 30 30"><path d="M21 1L29 5V25L21 29L7 17L3 20L1 19V11L3 10L7 13ZM21 9L13 15L21 21Z" fill="#8661c5"/><path d="M21 1L29 5V25L21 29Z" fill="#a07de0"/></svg>
<div class="a" style="left:2477.5px;top:1050.5px;width:20px;height:20px;background:#28a8ea;border-radius:2px"></div><div class="a" style="left:2471.5px;top:1054.5px;width:14px;height:14px;background:#0a5aa8;color:#fff;font-size:10px;font-weight:bold;text-align:center;line-height:14px">o</div>
<div class="a" style="left:2518.5px;top:1046.5px;width:25px;height:25px;background:#5865f2"></div><svg class="a" style="left:2523.5px;top:1053.5px" width="20" height="16"><path d="M3 2Q10 -1 17 2Q20 8 19 13Q16 15 14 15L13 13Q10 14 7 13L6 15Q4 15 1 13Q0 8 3 2Z" fill="#fff"/><circle cx="7" cy="8.5" r="1.8" fill="#5865f2"/><circle cx="13" cy="8.5" r="1.8" fill="#5865f2"/></svg>
<svg class="a" style="left:2567.5px;top:1046.5px" width="25" height="25" viewBox="0 0 30 30"><path d="M15 2L27 8V22L15 28L3 22V8Z" fill="#1e4a78"/><path d="M15 2L27 8L15 14L3 8Z" fill="#8fb8e0"/><path d="M3 8L15 14V28L3 22Z" fill="#2d6aa8"/></svg>
<div class="a" style="left:2606px;top:1040px;width:48px;height:40px;background:#e6eff6"></div>
<div class="a" style="left:2621.5px;top:1049.5px;width:24px;height:20px;background:linear-gradient(#e8f2fa,#b8d4ea);border:1px solid #7a9ab8"></div><svg class="a" style="left:2623.5px;top:1052.5px" width="20" height="14"><path d="M0 10L5 10L8 3L11 12L14 6L20 6" stroke="#3a7ac8" stroke-width="1.5" fill="none"/></svg><div class="a" style="left:2617.5px;top:1056.5px;width:10px;height:14px;background:#c8ccd0;border:1px solid #999"></div><div class="a" style="left:2625.5px;top:1069.5px;width:16px;height:4px;background:#9aa0a8"></div>
<div class="a" style="left:2665.5px;top:1046.5px;width:25px;height:25px;background:#2b2b2b;border-radius:2px"></div><div class="a" style="left:2667.5px;top:1048.5px;width:11px;height:8px;background:#fff;color:#000;font-size:7px;font-weight:bold;line-height:8px">64</div><svg class="a" style="left:2669.5px;top:1052.5px" width="24" height="22"><path d="M2 20L10 12L14 5L22 2L20 8L12 14L6 21Z" fill="#f5a01a"/><circle cx="16" cy="9" r="4" fill="#e0501a"/></svg>
<div class="a" style="left:2714.5px;top:1049.5px;width:25px;height:24px;background:#0c0c0c;border:1px solid #888;box-sizing:border-box"></div><div class="a" style="left:2714.5px;top:1049.5px;width:25px;height:3px;background:#ccc"></div><div class="a" style="left:2717.5px;top:1055.5px;width:10px;height:2px;background:#ccc"></div>
<div class="a" style="left:2216px;top:1077px;width:42px;height:3px;background:#1a73c8"></div>
<div class="a" style="left:2265px;top:1077px;width:42px;height:3px;background:#1a73c8"></div>
<div class="a" style="left:2559px;top:1077px;width:42px;height:3px;background:#1a73c8"></div>
<div class="a" style="left:2608px;top:1077px;width:44px;height:3px;background:#1a73c8"></div>
<div class="a" style="left:2657px;top:1077px;width:42px;height:3px;background:#1a73c8"></div>
<div class="a" style="left:2706px;top:1077px;width:42px;height:3px;background:#1a73c8"></div>
<div class="a nw" style="left:3791px;top:1043px;font-size:12.5px;color:#222">12:31</div>
<div class="a nw" style="left:3776px;top:1061px;font-size:12px;color:#222">05/06/2024</div><div class="a nw" style="left:3384px;top:880px;font-size:150px;font-weight:bold;color:rgba(60,60,60,0.085);letter-spacing:7px;line-height:150px;transform:scaleY(1.14);transform-origin:0 0">Platzi</div>
<svg class="a" style="left:3130px;top:830px" width="240" height="250" viewBox="3130 830 240 250"><path d="M3262 1050L3176 955L3250 871L3322 940L3258 1003" fill="none" stroke="rgba(150,205,80,0.13)" stroke-width="30" stroke-linejoin="round" stroke-linecap="round"/></svg>

</body></html>
